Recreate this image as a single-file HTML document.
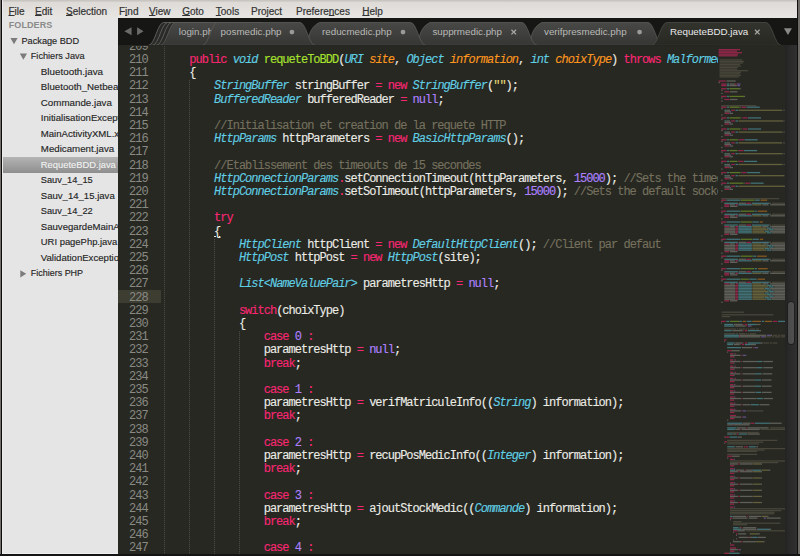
<!DOCTYPE html>
<html><head><meta charset="utf-8"><style>
*{margin:0;padding:0;box-sizing:border-box}
html,body{width:800px;height:556px;overflow:hidden;background:#272822;position:relative}
body{font-family:"Liberation Sans",sans-serif}
#top{position:absolute;left:0;top:0;width:800px;height:2px;background:linear-gradient(#c4c1bd,#d6d3cf);z-index:5}
#menubar{position:absolute;left:0;top:0;width:800px;height:17.5px;background:linear-gradient(#dcd9d5,#e8e6e3);z-index:4}
.mi{position:absolute;top:5.8px;font-size:10px;color:#333;-webkit-text-stroke:0.2px #333;line-height:12px;white-space:nowrap}
.mi u{text-decoration:underline;text-underline-offset:0px;text-decoration-thickness:1px}
#sidebar{position:absolute;left:0;top:17.5px;width:118px;height:540px;background:#e5e5e5;overflow:hidden;z-index:3}
#folders{position:absolute;left:8.7px;top:2.6px;font-size:9px;font-weight:bold;color:#8a8a8a;letter-spacing:0.1px}
.si{position:absolute;font-size:9.2px;color:#262626;-webkit-text-stroke:0.15px #262626;white-space:nowrap;line-height:12px;margin-top:-16.2px}
.selt{color:#f2f2f2;-webkit-text-stroke:0.1px #f2f2f2}
.sel{position:absolute;left:0;width:118px;height:15.7px;background:linear-gradient(#b4b4b4,#8e8e8e);margin-top:-16.2px}
.tri{position:absolute;width:0;height:0;border-left:3.7px solid transparent;border-right:3.7px solid transparent;border-top:6.4px solid #7c7c7c;margin-top:-16.2px}
.tric{position:absolute;width:0;height:0;border-top:3.8px solid transparent;border-bottom:3.8px solid transparent;border-left:6px solid #7a7a7a;margin-top:-16.2px}
#tabbar{position:absolute;left:118px;top:17.5px;width:682px;height:27.3px;background:#1c1c1a;z-index:3;overflow:hidden}
#tabbar svg{position:absolute;left:0;top:0}
#curline{position:absolute;left:118px;width:43px;height:13.2px;background:#3e3d32;top:290.1px}
.gn{position:absolute;left:118px;width:29.6px;text-align:right;font-family:"Liberation Mono",monospace;font-size:12px;letter-spacing:-1px;color:#898a83;line-height:13.2px;white-space:pre}
.cl{position:absolute;left:164.5px;-webkit-text-stroke:0.12px currentColor;font-family:"Liberation Mono",monospace;font-size:12px;letter-spacing:-1px;color:#ececE6;line-height:13.2px;white-space:pre}
.ig{position:absolute;width:1px;background:repeating-linear-gradient(#45463e 0 1px,#2f302a 1px 2px)}
.kw{color:#f92672}
.ty{color:#60cfe4;font-style:italic}
.fn{color:#a6e22e}
.pa{color:#fd971f;font-style:italic}
.nu{color:#ae81ff}
.st{color:#e6db74}
.cm{color:#75715e}
.ul{text-decoration:underline}
#minimap{position:absolute;left:718px;top:44px;width:67px;height:512px;background:#272822;z-index:2;overflow:hidden}
#sbtrack{position:absolute;left:785.4px;top:44px;width:11.6px;height:512px;background:linear-gradient(90deg,#232323,#2a2a2a 40%,#303030);z-index:2}
#thumb{position:absolute;left:2.3px;top:258.2px;width:6.4px;height:41.8px;border-radius:3.2px;background:linear-gradient(90deg,#4a4a4a,#505050);box-shadow:0 0 0 1px #1e1e1e}
#rborder{position:absolute;left:797px;top:0;width:3px;height:556px;background:linear-gradient(90deg,#0e0e0e 0 1px,#6d6965 1px);z-index:6}
#lborder{position:absolute;left:0;top:0;width:3px;height:556px;background:linear-gradient(90deg,#77716c 0 1.2px,#0a0a0a 1.2px 2.2px,#ececec 2.2px);z-index:6}
#bborder{position:absolute;left:0;top:553.8px;width:800px;height:2.2px;background:#141414;z-index:6}
#sbline{position:absolute;left:2px;top:552.8px;width:116px;height:1px;background:#eeeeee;z-index:5}
#minimap i{position:absolute;height:1.25px;display:block}
#edtop{position:absolute;left:118px;top:44.8px;width:600px;height:1.7px;background:#252621;z-index:3}

</style></head><body>
<div id="top"></div>
<div id="menubar"><div class="mi" style="left:8.5px"><u>F</u>ile</div>
<div class="mi" style="left:35px"><u>E</u>dit</div>
<div class="mi" style="left:66px"><u>S</u>election</div>
<div class="mi" style="left:119px">F<u>i</u>nd</div>
<div class="mi" style="left:149px"><u>V</u>iew</div>
<div class="mi" style="left:182.2px"><u>G</u>oto</div>
<div class="mi" style="left:215.8px"><u>T</u>ools</div>
<div class="mi" style="left:251px">Project</div>
<div class="mi" style="left:296px">Prefere<u>n</u>ces</div>
<div class="mi" style="left:362.3px"><u>H</u>elp</div></div>
<div id="sidebar">
<div id="folders">FOLDERS</div>
<div class="si" style="top:33.5px;left:21.5px;font-size:9.19px">Package BDD</div>
<svg style="position:absolute;left:0;top:0;overflow:visible" width="1" height="1"><path d="M10.4,19.90 L17.60,19.90 L14.00,26.20 Z" fill="#7c7c7c"/></svg>
<div class="si" style="top:49.0px;left:30.75px;font-size:9.17px">Fichiers Java</div>
<svg style="position:absolute;left:0;top:0;overflow:visible" width="1" height="1"><path d="M19.8,35.40 L27.00,35.40 L23.40,41.70 Z" fill="#7c7c7c"/></svg>
<div class="si" style="top:64.5px;left:40.8px;font-size:9.83px">Bluetooth.java</div>
<div class="si" style="top:80.0px;left:40.8px;font-size:9.7px">Bluetooth_Netbeans.java</div>
<div class="si" style="top:95.5px;left:40.8px;font-size:9.78px">Commande.java</div>
<div class="si" style="top:111.0px;left:40.8px;font-size:9.6px">InitialisationException.java</div>
<div class="si" style="top:126.5px;left:40.8px;font-size:9.6px">MainActivityXML.xml</div>
<div class="si" style="top:142.0px;left:40.8px;font-size:9.71px">Medicament.java</div>
<div class="sel" style="top:155.5px"></div>
<div class="si selt" style="top:157.5px;left:40.8px;font-size:9.39px">RequeteBDD.java</div>
<div class="si" style="top:173.0px;left:40.8px;font-size:9.26px">Sauv_14_15</div>
<div class="si" style="top:188.5px;left:40.8px;font-size:9.57px">Sauv_14_15.java</div>
<div class="si" style="top:204.0px;left:40.8px;font-size:9.26px">Sauv_14_22</div>
<div class="si" style="top:219.5px;left:40.8px;font-size:9.6px">SauvegardeMainActivity.java</div>
<div class="si" style="top:235.0px;left:40.8px;font-size:9.44px">URI pagePhp.java</div>
<div class="si" style="top:250.5px;left:40.8px;font-size:9.6px">ValidationException.java</div>
<div class="si" style="top:266.0px;left:30.75px;font-size:8.98px">Fichiers PHP</div>
<svg style="position:absolute;left:0;top:0;overflow:visible" width="1" height="1"><path d="M20.3,252.20 L26.2,255.80 L20.3,259.40 Z" fill="#7c7c7c"/></svg>
</div>
<div id="tabbar"><svg width="682" height="27.3" viewBox="118 17.5 682 27.3">
<defs><linearGradient id="gi" x1="0" y1="0" x2="0" y2="1"><stop offset="0" stop-color="#484846"/><stop offset="1" stop-color="#363634"/></linearGradient>
<linearGradient id="ga" x1="0" y1="0" x2="0" y2="1"><stop offset="0" stop-color="#32332d"/><stop offset="1" stop-color="#272822"/></linearGradient></defs>
<rect x="118" y="17.5" width="682" height="27.3" fill="#161614"/>
<path d="M124.3,30.75 L131.5,26.7 L131.5,34.8 Z" fill="#6a6a68"/>
<path d="M143.5,30.75 L137,26.7 L137,34.8 Z" fill="#6a6a68"/>
<path d="M529.9,44.8 C530.9,40 530.9,27 541.9,22.0 L648.0,22.0 C654.0,22.0 657.0,44.8 663.0,44.8 Z" fill="url(#gi)" stroke="#5a5a58" stroke-width="0.8"/>
<text x="544" y="34.4" font-family="Liberation Sans" font-size="9.8" fill="#b9b9b7">verifpresmedic.php</text>
<circle cx="639.6" cy="31.6" r="2.4" fill="#9a9a98"/>
<path d="M418.0,44.8 C419.0,40 419.0,27 430.0,22.0 L521.9,22.0 C527.9,22.0 530.9,44.8 536.9,44.8 Z" fill="url(#gi)" stroke="#5a5a58" stroke-width="0.8"/>
<text x="432.4" y="34.4" font-family="Liberation Sans" font-size="9.8" fill="#b9b9b7">supprmedic.php</text>
<path d="M511.45,29.3 L516.05,33.9 M516.05,29.3 L511.45,33.9" stroke="#a8a8a6" stroke-width="1.3"/>
<path d="M307.4,44.8 C308.4,40 308.4,27 319.4,22.0 L410.6,22.0 C416.6,22.0 419.6,44.8 425.6,44.8 Z" fill="url(#gi)" stroke="#5a5a58" stroke-width="0.8"/>
<text x="322" y="34.4" font-family="Liberation Sans" font-size="9.8" fill="#b9b9b7">reducmedic.php</text>
<circle cx="403" cy="31.6" r="2.4" fill="#9a9a98"/>
<path d="M148.6,44.8 C154.6,44.8 157.6,22.0 163.6,22.0 L260.0,22.0 C266.0,22.0 269.0,44.8 275.0,44.8 Z" fill="#2a2a28" stroke="#62625f" stroke-width="0.9"/>
<path d="M152.6,44.8 C158.6,44.8 161.6,22.0 167.6,22.0 L260.0,22.0 C266.0,22.0 269.0,44.8 275.0,44.8 Z" fill="#2a2a28" stroke="#62625f" stroke-width="0.9"/>
<path d="M156.5,44.8 C162.5,44.8 165.5,22.0 171.5,22.0 L260.0,22.0 C266.0,22.0 269.0,44.8 275.0,44.8 Z" fill="#2a2a28" stroke="#62625f" stroke-width="0.9"/>
<path d="M160.4,44.8 C166.4,44.8 169.4,22.0 175.4,22.0 L260.0,22.0 C266.0,22.0 269.0,44.8 275.0,44.8 Z" fill="url(#gi)" stroke="#5a5a58" stroke-width="0.8"/>
<text x="178.8" y="34.4" font-family="Liberation Sans" font-size="9.8" fill="#b9b9b7">login.php</text>
<path d="M202.5,44.8 C208.5,44.8 211.5,22.0 217.5,22.0 L300.0,22.0 C306.0,22.0 309.0,44.8 315.0,44.8 Z" fill="url(#gi)" stroke="#5a5a58" stroke-width="0.8"/>
<text x="220.6" y="34.4" font-family="Liberation Sans" font-size="9.8" fill="#b9b9b7">posmedic.php</text>
<circle cx="291.9" cy="31.6" r="2.4" fill="#9a9a98"/>
<path d="M651.9,44.8 C657.9,44.8 660.9,22.0 666.9,22.0 L766.0,22.0 C772.0,22.0 775.0,44.8 781.0,44.8 Z" fill="url(#ga)" stroke="#4a4a46" stroke-width="0.8"/>
<text x="670" y="34.4" font-family="Liberation Sans" font-size="9.8" fill="#e8e8e8">RequeteBDD.java</text>
<path d="M755.0,29.3 L759.5999999999999,33.9 M759.5999999999999,29.3 L755.0,33.9" stroke="#a8a8a6" stroke-width="1.3"/>
<path d="M784,27.8 L792,27.8 L788,34.5 Z" fill="#8a8a88"/>
</svg></div>
<div id="edtop"></div>
<div id="editor">
<div id="curline"></div>
<div class="ig" style="left:164.4px;top:44.0px;height:524.7px"></div>
<div class="ig" style="left:189.3px;top:80.3px;height:488.4px"></div>
<div class="ig" style="left:214.2px;top:238.7px;height:330.0px"></div>
<div class="ig" style="left:239.1px;top:331.1px;height:237.6px"></div>
<div class="gn" style="top:40.70px">209</div>
<div class="gn" style="top:53.90px">210</div>
<div class="cl" style="top:53.90px">    <span class="kw">public</span> <span class="ty">void</span> <span class="fn">requeteToBDD</span>(<span class="ty">URI</span> <span class="pa">site</span>, <span class="ty">Object</span> <span class="pa">information</span>, <span class="ty">int</span> <span class="pa">choixType</span>) <span class="kw">throws</span> <span class="ty">MalformedURLException</span></div>
<div class="gn" style="top:67.10px">211</div>
<div class="cl" style="top:67.10px">    {</div>
<div class="gn" style="top:80.30px">212</div>
<div class="cl" style="top:80.30px">        <span class="ty">StringBuffer</span> stringBuffer <span class="kw">=</span> <span class="kw">new</span> <span class="ty">StringBuffer</span>(<span class="st">&quot;&quot;</span>);</div>
<div class="gn" style="top:93.50px">213</div>
<div class="cl" style="top:93.50px">        <span class="ty">BufferedReader</span> bufferedReader <span class="kw">=</span> <span class="nu">null</span>;</div>
<div class="gn" style="top:106.70px">214</div>
<div class="gn" style="top:119.90px">215</div>
<div class="cl" style="top:119.90px">        <span class="cm">//Initialisation et creation de la requete HTTP</span></div>
<div class="gn" style="top:133.10px">216</div>
<div class="cl" style="top:133.10px">        <span class="ty">HttpParams</span> httpParameters <span class="kw">=</span> <span class="kw">new</span> <span class="ty">BasicHttpParams</span>();</div>
<div class="gn" style="top:146.30px">217</div>
<div class="gn" style="top:159.50px">218</div>
<div class="cl" style="top:159.50px">        <span class="cm">//Etablissement des timeouts de 15 secondes</span></div>
<div class="gn" style="top:172.70px">219</div>
<div class="cl" style="top:172.70px">        <span class="ty">HttpConnectionParams</span><span class="kw">.</span>setConnectionTimeout(httpParameters, <span class="nu">15000</span>); <span class="cm">//Sets the timeout</span></div>
<div class="gn" style="top:185.90px">220</div>
<div class="cl" style="top:185.90px">        <span class="ty">HttpConnectionParams</span><span class="kw">.</span>setSoTimeout(httpParameters, <span class="nu">15000</span>); <span class="cm">//Sets the default socket</span></div>
<div class="gn" style="top:199.10px">221</div>
<div class="gn" style="top:212.30px">222</div>
<div class="cl" style="top:212.30px">        <span class="kw">try</span></div>
<div class="gn" style="top:225.50px">223</div>
<div class="cl" style="top:225.50px">        <span class="ul">{</span></div>
<div class="gn" style="top:238.70px">224</div>
<div class="cl" style="top:238.70px">            <span class="ty">HttpClient</span> httpClient <span class="kw">=</span> <span class="kw">new</span> <span class="ty">DefaultHttpClient</span>(); <span class="cm">//Client par defaut</span></div>
<div class="gn" style="top:251.90px">225</div>
<div class="cl" style="top:251.90px">            <span class="ty">HttpPost</span> httpPost <span class="kw">=</span> <span class="kw">new</span> <span class="ty">HttpPost</span>(site);</div>
<div class="gn" style="top:265.10px">226</div>
<div class="gn" style="top:278.30px">227</div>
<div class="cl" style="top:278.30px">            <span class="ty">List&lt;NameValuePair&gt;</span> parametresHttp <span class="kw">=</span> <span class="nu">null</span>;</div>
<div class="gn" style="top:291.50px">228</div>
<div class="gn" style="top:304.70px">229</div>
<div class="cl" style="top:304.70px">            <span class="kw">switch</span>(choixType)</div>
<div class="gn" style="top:317.90px">230</div>
<div class="cl" style="top:317.90px">            {</div>
<div class="gn" style="top:331.10px">231</div>
<div class="cl" style="top:331.10px">                <span class="kw">case</span> <span class="nu">0</span> <span class="kw">:</span></div>
<div class="gn" style="top:344.30px">232</div>
<div class="cl" style="top:344.30px">                parametresHttp <span class="kw">=</span> <span class="nu">null</span>;</div>
<div class="gn" style="top:357.50px">233</div>
<div class="cl" style="top:357.50px">                <span class="kw">break</span>;</div>
<div class="gn" style="top:370.70px">234</div>
<div class="gn" style="top:383.90px">235</div>
<div class="cl" style="top:383.90px">                <span class="kw">case</span> <span class="nu">1</span> <span class="kw">:</span></div>
<div class="gn" style="top:397.10px">236</div>
<div class="cl" style="top:397.10px">                parametresHttp <span class="kw">=</span> verifMatriculeInfo((<span class="ty">String</span>) information);</div>
<div class="gn" style="top:410.30px">237</div>
<div class="cl" style="top:410.30px">                <span class="kw">break</span>;</div>
<div class="gn" style="top:423.50px">238</div>
<div class="gn" style="top:436.70px">239</div>
<div class="cl" style="top:436.70px">                <span class="kw">case</span> <span class="nu">2</span> <span class="kw">:</span></div>
<div class="gn" style="top:449.90px">240</div>
<div class="cl" style="top:449.90px">                parametresHttp <span class="kw">=</span> recupPosMedicInfo((<span class="ty">Integer</span>) information);</div>
<div class="gn" style="top:463.10px">241</div>
<div class="cl" style="top:463.10px">                <span class="kw">break</span>;</div>
<div class="gn" style="top:476.30px">242</div>
<div class="gn" style="top:489.50px">243</div>
<div class="cl" style="top:489.50px">                <span class="kw">case</span> <span class="nu">3</span> <span class="kw">:</span></div>
<div class="gn" style="top:502.70px">244</div>
<div class="cl" style="top:502.70px">                parametresHttp <span class="kw">=</span> ajoutStockMedic((<span class="ty">Commande</span>) information);</div>
<div class="gn" style="top:515.90px">245</div>
<div class="cl" style="top:515.90px">                <span class="kw">break</span>;</div>
<div class="gn" style="top:529.10px">246</div>
<div class="gn" style="top:542.30px">247</div>
<div class="cl" style="top:542.30px">                <span class="kw">case</span> <span class="nu">4</span> <span class="kw">:</span></div>
<div class="gn" style="top:555.50px">248</div>
<div id="minimap"><svg width="67" height="512" viewBox="718 44 67 512" style="position:absolute;left:0;top:0"><defs><filter id="mb" x="-5%" y="-5%" width="110%" height="110%"><feGaussianBlur stdDeviation="0.35"/></filter></defs><g filter="url(#mb)"><rect x="718.60" y="48.98" width="21.40" height="1.25" fill="rgb(249,38,114)" fill-opacity="0.5"/><rect x="718.60" y="50.52" width="18.40" height="1.25" fill="rgb(249,38,114)" fill-opacity="0.5"/><rect x="718.60" y="52.06" width="23.40" height="1.25" fill="rgb(249,38,114)" fill-opacity="0.5"/><rect x="718.60" y="53.60" width="19.40" height="1.25" fill="rgb(249,38,114)" fill-opacity="0.5"/><rect x="718.60" y="55.15" width="18.90" height="1.25" fill="rgb(249,38,114)" fill-opacity="0.5"/><rect x="719.50" y="59.27" width="22.50" height="1.25" fill="rgb(117,113,94)" fill-opacity="0.42"/><rect x="719.50" y="60.82" width="24.50" height="1.25" fill="rgb(117,113,94)" fill-opacity="0.42"/><rect x="719.50" y="62.36" width="23.50" height="1.25" fill="rgb(117,113,94)" fill-opacity="0.42"/><rect x="719.50" y="63.90" width="20.50" height="1.25" fill="rgb(117,113,94)" fill-opacity="0.42"/><rect x="719.50" y="65.45" width="21.50" height="1.25" fill="rgb(117,113,94)" fill-opacity="0.42"/><rect x="719.50" y="66.99" width="18.50" height="1.25" fill="rgb(117,113,94)" fill-opacity="0.42"/><rect x="719.50" y="68.53" width="17.50" height="1.25" fill="rgb(117,113,94)" fill-opacity="0.42"/><rect x="719.50" y="70.08" width="28.50" height="1.25" fill="rgb(117,113,94)" fill-opacity="0.42"/><rect x="719.50" y="71.62" width="21.50" height="1.25" fill="rgb(117,113,94)" fill-opacity="0.42"/><rect x="719.50" y="73.16" width="20.50" height="1.25" fill="rgb(117,113,94)" fill-opacity="0.42"/><rect x="719.50" y="74.70" width="21.50" height="1.25" fill="rgb(117,113,94)" fill-opacity="0.42"/><rect x="719.50" y="76.25" width="19.50" height="1.25" fill="rgb(117,113,94)" fill-opacity="0.42"/><rect x="718.62" y="80.38" width="7.00" height="1.25" fill="rgb(249,38,114)" fill-opacity="0.5"/><rect x="726.50" y="80.38" width="9.19" height="1.25" fill="rgb(248,248,242)" fill-opacity="0.27"/><rect x="718.62" y="81.92" width="1.31" height="1.25" fill="rgb(248,248,242)" fill-opacity="0.27"/><rect x="721.25" y="83.46" width="5.25" height="1.25" fill="rgb(249,38,114)" fill-opacity="0.5"/><rect x="726.94" y="83.46" width="2.19" height="1.25" fill="rgb(102,217,239)" fill-opacity="0.42"/><rect x="729.56" y="83.46" width="5.25" height="1.25" fill="rgb(248,248,242)" fill-opacity="0.27"/><rect x="734.81" y="83.46" width="1.75" height="1.25" fill="rgb(249,38,114)" fill-opacity="0.5"/><rect x="737.00" y="83.46" width="3.50" height="1.25" fill="rgb(174,129,255)" fill-opacity="0.45"/><rect x="721.25" y="85.00" width="5.25" height="1.25" fill="rgb(249,38,114)" fill-opacity="0.5"/><rect x="726.94" y="85.00" width="2.19" height="1.25" fill="rgb(102,217,239)" fill-opacity="0.42"/><rect x="729.56" y="85.00" width="7.26" height="1.25" fill="rgb(248,248,242)" fill-opacity="0.27"/><rect x="737.43" y="85.00" width="2.62" height="1.25" fill="rgb(174,129,255)" fill-opacity="0.45"/><rect x="721.25" y="88.09" width="5.25" height="1.25" fill="rgb(249,38,114)" fill-opacity="0.5"/><rect x="726.94" y="88.09" width="2.19" height="1.25" fill="rgb(102,217,239)" fill-opacity="0.42"/><rect x="729.56" y="88.09" width="10.06" height="1.25" fill="rgb(166,226,46)" fill-opacity="0.42"/><rect x="739.62" y="88.09" width="1.05" height="1.25" fill="rgb(248,248,242)" fill-opacity="0.27"/><rect x="721.25" y="89.63" width="1.31" height="1.25" fill="rgb(248,248,242)" fill-opacity="0.27"/><rect x="724.31" y="91.18" width="5.25" height="1.25" fill="rgb(249,38,114)" fill-opacity="0.5"/><rect x="730.00" y="91.18" width="7.44" height="1.25" fill="rgb(248,248,242)" fill-opacity="0.27"/><rect x="721.25" y="92.72" width="1.31" height="1.25" fill="rgb(248,248,242)" fill-opacity="0.27"/><rect x="721.25" y="95.81" width="5.25" height="1.25" fill="rgb(249,38,114)" fill-opacity="0.5"/><rect x="726.94" y="95.81" width="2.19" height="1.25" fill="rgb(102,217,239)" fill-opacity="0.42"/><rect x="729.56" y="95.81" width="14.44" height="1.25" fill="rgb(166,226,46)" fill-opacity="0.42"/><rect x="744.00" y="95.81" width="1.05" height="1.25" fill="rgb(248,248,242)" fill-opacity="0.27"/><rect x="721.25" y="97.35" width="1.31" height="1.25" fill="rgb(248,248,242)" fill-opacity="0.27"/><rect x="724.31" y="98.89" width="5.25" height="1.25" fill="rgb(249,38,114)" fill-opacity="0.5"/><rect x="730.00" y="98.89" width="7.44" height="1.25" fill="rgb(248,248,242)" fill-opacity="0.27"/><rect x="721.25" y="100.43" width="1.31" height="1.25" fill="rgb(248,248,242)" fill-opacity="0.27"/><rect x="721.25" y="105.06" width="35.00" height="1.25" fill="rgb(117,113,94)" fill-opacity="0.42"/><rect x="721.25" y="106.58" width="5.25" height="1.25" fill="rgb(249,38,114)" fill-opacity="0.5"/><rect x="726.94" y="106.58" width="2.19" height="1.25" fill="rgb(102,217,239)" fill-opacity="0.42"/><rect x="729.56" y="106.58" width="10.06" height="1.25" fill="rgb(166,226,46)" fill-opacity="0.42"/><rect x="740.06" y="106.58" width="0.61" height="1.25" fill="rgb(248,248,242)" fill-opacity="0.27"/><rect x="741.37" y="106.58" width="4.81" height="1.25" fill="rgb(249,38,114)" fill-opacity="0.5"/><rect x="746.62" y="106.58" width="13.12" height="1.25" fill="rgb(102,217,239)" fill-opacity="0.42"/><rect x="721.25" y="108.12" width="1.31" height="1.25" fill="rgb(248,248,242)" fill-opacity="0.27"/><rect x="724.49" y="109.66" width="1.84" height="1.25" fill="rgb(102,217,239)" fill-opacity="0.42"/><rect x="726.50" y="109.66" width="3.50" height="1.25" fill="rgb(248,248,242)" fill-opacity="0.27"/><rect x="731.31" y="109.66" width="3.50" height="1.25" fill="rgb(249,38,114)" fill-opacity="0.5"/><rect x="735.51" y="109.66" width="2.45" height="1.25" fill="rgb(102,217,239)" fill-opacity="0.42"/><rect x="738.48" y="109.66" width="42.69" height="1.25" fill="rgb(230,219,116)" fill-opacity="0.32"/><rect x="781.18" y="109.66" width="1.05" height="1.25" fill="rgb(248,248,242)" fill-opacity="0.27"/><rect x="782.93" y="109.66" width="3.06" height="1.25" fill="rgb(117,113,94)" fill-opacity="0.42"/><rect x="724.49" y="111.20" width="5.51" height="1.25" fill="rgb(248,248,242)" fill-opacity="0.27"/><rect x="730.00" y="111.20" width="1.05" height="1.25" fill="rgb(174,129,255)" fill-opacity="0.45"/><rect x="724.49" y="112.75" width="4.55" height="1.25" fill="rgb(249,38,114)" fill-opacity="0.5"/><rect x="729.47" y="112.75" width="3.50" height="1.25" fill="rgb(248,248,242)" fill-opacity="0.27"/><rect x="721.25" y="114.29" width="1.31" height="1.25" fill="rgb(248,248,242)" fill-opacity="0.27"/><rect x="721.25" y="117.28" width="5.25" height="1.25" fill="rgb(249,38,114)" fill-opacity="0.5"/><rect x="726.94" y="117.28" width="2.19" height="1.25" fill="rgb(102,217,239)" fill-opacity="0.42"/><rect x="729.56" y="117.28" width="10.94" height="1.25" fill="rgb(166,226,46)" fill-opacity="0.42"/><rect x="740.93" y="117.28" width="0.61" height="1.25" fill="rgb(248,248,242)" fill-opacity="0.27"/><rect x="742.68" y="117.28" width="4.81" height="1.25" fill="rgb(249,38,114)" fill-opacity="0.5"/><rect x="747.93" y="117.28" width="13.12" height="1.25" fill="rgb(102,217,239)" fill-opacity="0.42"/><rect x="721.25" y="118.82" width="1.31" height="1.25" fill="rgb(248,248,242)" fill-opacity="0.27"/><rect x="724.49" y="120.36" width="1.84" height="1.25" fill="rgb(102,217,239)" fill-opacity="0.42"/><rect x="726.50" y="120.36" width="3.50" height="1.25" fill="rgb(248,248,242)" fill-opacity="0.27"/><rect x="731.31" y="120.36" width="3.50" height="1.25" fill="rgb(249,38,114)" fill-opacity="0.5"/><rect x="735.51" y="120.36" width="2.45" height="1.25" fill="rgb(102,217,239)" fill-opacity="0.42"/><rect x="738.48" y="120.36" width="44.01" height="1.25" fill="rgb(230,219,116)" fill-opacity="0.32"/><rect x="782.49" y="120.36" width="1.05" height="1.25" fill="rgb(248,248,242)" fill-opacity="0.27"/><rect x="784.24" y="120.36" width="1.75" height="1.25" fill="rgb(117,113,94)" fill-opacity="0.42"/><rect x="724.49" y="121.90" width="5.51" height="1.25" fill="rgb(248,248,242)" fill-opacity="0.27"/><rect x="730.00" y="121.90" width="1.05" height="1.25" fill="rgb(174,129,255)" fill-opacity="0.45"/><rect x="724.49" y="123.45" width="4.55" height="1.25" fill="rgb(249,38,114)" fill-opacity="0.5"/><rect x="729.47" y="123.45" width="3.50" height="1.25" fill="rgb(248,248,242)" fill-opacity="0.27"/><rect x="721.25" y="124.99" width="1.31" height="1.25" fill="rgb(248,248,242)" fill-opacity="0.27"/><rect x="721.25" y="128.38" width="5.25" height="1.25" fill="rgb(249,38,114)" fill-opacity="0.5"/><rect x="726.94" y="128.38" width="2.19" height="1.25" fill="rgb(102,217,239)" fill-opacity="0.42"/><rect x="729.56" y="128.38" width="10.94" height="1.25" fill="rgb(166,226,46)" fill-opacity="0.42"/><rect x="740.93" y="128.38" width="0.61" height="1.25" fill="rgb(248,248,242)" fill-opacity="0.27"/><rect x="742.68" y="128.38" width="4.81" height="1.25" fill="rgb(249,38,114)" fill-opacity="0.5"/><rect x="747.93" y="128.38" width="13.12" height="1.25" fill="rgb(102,217,239)" fill-opacity="0.42"/><rect x="721.25" y="129.92" width="1.31" height="1.25" fill="rgb(248,248,242)" fill-opacity="0.27"/><rect x="724.49" y="131.46" width="1.84" height="1.25" fill="rgb(102,217,239)" fill-opacity="0.42"/><rect x="726.50" y="131.46" width="3.50" height="1.25" fill="rgb(248,248,242)" fill-opacity="0.27"/><rect x="731.31" y="131.46" width="3.50" height="1.25" fill="rgb(249,38,114)" fill-opacity="0.5"/><rect x="735.51" y="131.46" width="2.45" height="1.25" fill="rgb(102,217,239)" fill-opacity="0.42"/><rect x="738.48" y="131.46" width="43.13" height="1.25" fill="rgb(230,219,116)" fill-opacity="0.32"/><rect x="781.62" y="131.46" width="1.05" height="1.25" fill="rgb(248,248,242)" fill-opacity="0.27"/><rect x="783.37" y="131.46" width="2.62" height="1.25" fill="rgb(117,113,94)" fill-opacity="0.42"/><rect x="724.49" y="133.00" width="5.51" height="1.25" fill="rgb(248,248,242)" fill-opacity="0.27"/><rect x="730.00" y="133.00" width="1.05" height="1.25" fill="rgb(174,129,255)" fill-opacity="0.45"/><rect x="724.49" y="134.55" width="4.55" height="1.25" fill="rgb(249,38,114)" fill-opacity="0.5"/><rect x="729.47" y="134.55" width="3.50" height="1.25" fill="rgb(248,248,242)" fill-opacity="0.27"/><rect x="721.25" y="136.09" width="1.31" height="1.25" fill="rgb(248,248,242)" fill-opacity="0.27"/><rect x="721.25" y="139.18" width="5.25" height="1.25" fill="rgb(249,38,114)" fill-opacity="0.5"/><rect x="726.94" y="139.18" width="2.19" height="1.25" fill="rgb(102,217,239)" fill-opacity="0.42"/><rect x="729.56" y="139.18" width="8.31" height="1.25" fill="rgb(166,226,46)" fill-opacity="0.42"/><rect x="738.31" y="139.18" width="0.61" height="1.25" fill="rgb(248,248,242)" fill-opacity="0.27"/><rect x="739.18" y="139.18" width="4.81" height="1.25" fill="rgb(249,38,114)" fill-opacity="0.5"/><rect x="744.43" y="139.18" width="13.12" height="1.25" fill="rgb(102,217,239)" fill-opacity="0.42"/><rect x="721.25" y="140.72" width="1.31" height="1.25" fill="rgb(248,248,242)" fill-opacity="0.27"/><rect x="724.49" y="142.26" width="1.84" height="1.25" fill="rgb(102,217,239)" fill-opacity="0.42"/><rect x="726.50" y="142.26" width="3.50" height="1.25" fill="rgb(248,248,242)" fill-opacity="0.27"/><rect x="731.31" y="142.26" width="3.50" height="1.25" fill="rgb(249,38,114)" fill-opacity="0.5"/><rect x="735.51" y="142.26" width="2.45" height="1.25" fill="rgb(102,217,239)" fill-opacity="0.42"/><rect x="738.48" y="142.26" width="42.69" height="1.25" fill="rgb(230,219,116)" fill-opacity="0.32"/><rect x="781.18" y="142.26" width="1.05" height="1.25" fill="rgb(248,248,242)" fill-opacity="0.27"/><rect x="782.93" y="142.26" width="3.06" height="1.25" fill="rgb(117,113,94)" fill-opacity="0.42"/><rect x="724.49" y="143.80" width="5.51" height="1.25" fill="rgb(248,248,242)" fill-opacity="0.27"/><rect x="730.00" y="143.80" width="1.05" height="1.25" fill="rgb(174,129,255)" fill-opacity="0.45"/><rect x="724.49" y="145.35" width="4.55" height="1.25" fill="rgb(249,38,114)" fill-opacity="0.5"/><rect x="729.47" y="145.35" width="3.50" height="1.25" fill="rgb(248,248,242)" fill-opacity="0.27"/><rect x="721.25" y="146.89" width="1.31" height="1.25" fill="rgb(248,248,242)" fill-opacity="0.27"/><rect x="721.25" y="149.97" width="5.25" height="1.25" fill="rgb(249,38,114)" fill-opacity="0.5"/><rect x="726.94" y="149.97" width="2.19" height="1.25" fill="rgb(102,217,239)" fill-opacity="0.42"/><rect x="729.56" y="149.97" width="7.87" height="1.25" fill="rgb(166,226,46)" fill-opacity="0.42"/><rect x="737.87" y="149.97" width="0.61" height="1.25" fill="rgb(248,248,242)" fill-opacity="0.27"/><rect x="738.75" y="149.97" width="4.81" height="1.25" fill="rgb(249,38,114)" fill-opacity="0.5"/><rect x="744.00" y="149.97" width="13.12" height="1.25" fill="rgb(102,217,239)" fill-opacity="0.42"/><rect x="721.25" y="151.52" width="1.31" height="1.25" fill="rgb(248,248,242)" fill-opacity="0.27"/><rect x="724.49" y="153.06" width="1.84" height="1.25" fill="rgb(102,217,239)" fill-opacity="0.42"/><rect x="726.50" y="153.06" width="3.50" height="1.25" fill="rgb(248,248,242)" fill-opacity="0.27"/><rect x="731.31" y="153.06" width="3.50" height="1.25" fill="rgb(249,38,114)" fill-opacity="0.5"/><rect x="735.51" y="153.06" width="2.45" height="1.25" fill="rgb(102,217,239)" fill-opacity="0.42"/><rect x="738.48" y="153.06" width="43.13" height="1.25" fill="rgb(230,219,116)" fill-opacity="0.32"/><rect x="781.62" y="153.06" width="1.05" height="1.25" fill="rgb(248,248,242)" fill-opacity="0.27"/><rect x="783.37" y="153.06" width="2.62" height="1.25" fill="rgb(117,113,94)" fill-opacity="0.42"/><rect x="724.49" y="154.60" width="5.51" height="1.25" fill="rgb(248,248,242)" fill-opacity="0.27"/><rect x="730.00" y="154.60" width="1.05" height="1.25" fill="rgb(174,129,255)" fill-opacity="0.45"/><rect x="724.49" y="156.15" width="4.55" height="1.25" fill="rgb(249,38,114)" fill-opacity="0.5"/><rect x="729.47" y="156.15" width="3.50" height="1.25" fill="rgb(248,248,242)" fill-opacity="0.27"/><rect x="721.25" y="157.69" width="1.31" height="1.25" fill="rgb(248,248,242)" fill-opacity="0.27"/><rect x="721.25" y="160.78" width="5.25" height="1.25" fill="rgb(249,38,114)" fill-opacity="0.5"/><rect x="726.94" y="160.78" width="2.19" height="1.25" fill="rgb(102,217,239)" fill-opacity="0.42"/><rect x="729.56" y="160.78" width="7.87" height="1.25" fill="rgb(166,226,46)" fill-opacity="0.42"/><rect x="737.87" y="160.78" width="0.61" height="1.25" fill="rgb(248,248,242)" fill-opacity="0.27"/><rect x="738.75" y="160.78" width="4.81" height="1.25" fill="rgb(249,38,114)" fill-opacity="0.5"/><rect x="744.00" y="160.78" width="13.12" height="1.25" fill="rgb(102,217,239)" fill-opacity="0.42"/><rect x="721.25" y="162.32" width="1.31" height="1.25" fill="rgb(248,248,242)" fill-opacity="0.27"/><rect x="724.49" y="163.86" width="1.84" height="1.25" fill="rgb(102,217,239)" fill-opacity="0.42"/><rect x="726.50" y="163.86" width="3.50" height="1.25" fill="rgb(248,248,242)" fill-opacity="0.27"/><rect x="731.31" y="163.86" width="3.50" height="1.25" fill="rgb(249,38,114)" fill-opacity="0.5"/><rect x="735.51" y="163.86" width="2.45" height="1.25" fill="rgb(102,217,239)" fill-opacity="0.42"/><rect x="738.48" y="163.86" width="43.13" height="1.25" fill="rgb(230,219,116)" fill-opacity="0.32"/><rect x="781.62" y="163.86" width="1.05" height="1.25" fill="rgb(248,248,242)" fill-opacity="0.27"/><rect x="783.37" y="163.86" width="2.62" height="1.25" fill="rgb(117,113,94)" fill-opacity="0.42"/><rect x="724.49" y="165.40" width="5.51" height="1.25" fill="rgb(248,248,242)" fill-opacity="0.27"/><rect x="730.00" y="165.40" width="1.05" height="1.25" fill="rgb(174,129,255)" fill-opacity="0.45"/><rect x="724.49" y="166.95" width="4.55" height="1.25" fill="rgb(249,38,114)" fill-opacity="0.5"/><rect x="729.47" y="166.95" width="3.50" height="1.25" fill="rgb(248,248,242)" fill-opacity="0.27"/><rect x="721.25" y="168.49" width="1.31" height="1.25" fill="rgb(248,248,242)" fill-opacity="0.27"/><rect x="721.25" y="171.97" width="5.25" height="1.25" fill="rgb(249,38,114)" fill-opacity="0.5"/><rect x="726.94" y="171.97" width="2.19" height="1.25" fill="rgb(102,217,239)" fill-opacity="0.42"/><rect x="729.56" y="171.97" width="10.94" height="1.25" fill="rgb(166,226,46)" fill-opacity="0.42"/><rect x="740.93" y="171.97" width="0.61" height="1.25" fill="rgb(248,248,242)" fill-opacity="0.27"/><rect x="741.81" y="171.97" width="4.81" height="1.25" fill="rgb(249,38,114)" fill-opacity="0.5"/><rect x="747.06" y="171.97" width="13.12" height="1.25" fill="rgb(102,217,239)" fill-opacity="0.42"/><rect x="721.25" y="173.52" width="1.31" height="1.25" fill="rgb(248,248,242)" fill-opacity="0.27"/><rect x="724.49" y="175.06" width="1.84" height="1.25" fill="rgb(102,217,239)" fill-opacity="0.42"/><rect x="726.50" y="175.06" width="3.50" height="1.25" fill="rgb(248,248,242)" fill-opacity="0.27"/><rect x="731.31" y="175.06" width="3.50" height="1.25" fill="rgb(249,38,114)" fill-opacity="0.5"/><rect x="735.51" y="175.06" width="2.45" height="1.25" fill="rgb(102,217,239)" fill-opacity="0.42"/><rect x="738.48" y="175.06" width="44.88" height="1.25" fill="rgb(230,219,116)" fill-opacity="0.32"/><rect x="783.37" y="175.06" width="1.05" height="1.25" fill="rgb(248,248,242)" fill-opacity="0.27"/><rect x="785.12" y="175.06" width="0.87" height="1.25" fill="rgb(117,113,94)" fill-opacity="0.42"/><rect x="724.49" y="176.60" width="5.51" height="1.25" fill="rgb(248,248,242)" fill-opacity="0.27"/><rect x="730.00" y="176.60" width="1.05" height="1.25" fill="rgb(174,129,255)" fill-opacity="0.45"/><rect x="724.49" y="178.15" width="4.55" height="1.25" fill="rgb(249,38,114)" fill-opacity="0.5"/><rect x="729.47" y="178.15" width="3.50" height="1.25" fill="rgb(248,248,242)" fill-opacity="0.27"/><rect x="721.25" y="179.69" width="1.31" height="1.25" fill="rgb(248,248,242)" fill-opacity="0.27"/><rect x="721.25" y="182.57" width="5.25" height="1.25" fill="rgb(249,38,114)" fill-opacity="0.5"/><rect x="726.94" y="182.57" width="2.19" height="1.25" fill="rgb(102,217,239)" fill-opacity="0.42"/><rect x="729.56" y="182.57" width="14.00" height="1.25" fill="rgb(166,226,46)" fill-opacity="0.42"/><rect x="744.00" y="182.57" width="0.61" height="1.25" fill="rgb(248,248,242)" fill-opacity="0.27"/><rect x="745.31" y="182.57" width="4.81" height="1.25" fill="rgb(249,38,114)" fill-opacity="0.5"/><rect x="750.56" y="182.57" width="13.12" height="1.25" fill="rgb(102,217,239)" fill-opacity="0.42"/><rect x="721.25" y="184.12" width="1.31" height="1.25" fill="rgb(248,248,242)" fill-opacity="0.27"/><rect x="724.49" y="185.66" width="1.84" height="1.25" fill="rgb(102,217,239)" fill-opacity="0.42"/><rect x="726.50" y="185.66" width="3.50" height="1.25" fill="rgb(248,248,242)" fill-opacity="0.27"/><rect x="731.31" y="185.66" width="3.50" height="1.25" fill="rgb(249,38,114)" fill-opacity="0.5"/><rect x="735.51" y="185.66" width="2.45" height="1.25" fill="rgb(102,217,239)" fill-opacity="0.42"/><rect x="738.48" y="185.66" width="45.76" height="1.25" fill="rgb(230,219,116)" fill-opacity="0.32"/><rect x="784.24" y="185.66" width="1.05" height="1.25" fill="rgb(248,248,242)" fill-opacity="0.27"/><rect x="724.49" y="187.20" width="5.51" height="1.25" fill="rgb(248,248,242)" fill-opacity="0.27"/><rect x="730.00" y="187.20" width="1.05" height="1.25" fill="rgb(174,129,255)" fill-opacity="0.45"/><rect x="724.49" y="188.75" width="4.55" height="1.25" fill="rgb(249,38,114)" fill-opacity="0.5"/><rect x="729.47" y="188.75" width="3.50" height="1.25" fill="rgb(248,248,242)" fill-opacity="0.27"/><rect x="721.25" y="190.29" width="1.31" height="1.25" fill="rgb(248,248,242)" fill-opacity="0.27"/><rect x="721.25" y="197.97" width="57.74" height="1.25" fill="rgb(117,113,94)" fill-opacity="0.42"/><rect x="721.25" y="199.57" width="4.81" height="1.25" fill="rgb(249,38,114)" fill-opacity="0.5"/><rect x="726.50" y="199.57" width="14.00" height="1.25" fill="rgb(102,217,239)" fill-opacity="0.42"/><rect x="740.93" y="199.57" width="13.56" height="1.25" fill="rgb(166,226,46)" fill-opacity="0.42"/><rect x="754.93" y="199.57" width="4.81" height="1.25" fill="rgb(102,217,239)" fill-opacity="0.42"/><rect x="760.62" y="199.57" width="6.56" height="1.25" fill="rgb(253,151,31)" fill-opacity="0.45"/><rect x="721.25" y="201.12" width="1.31" height="1.25" fill="rgb(248,248,242)" fill-opacity="0.27"/><rect x="724.31" y="202.66" width="13.56" height="1.25" fill="rgb(102,217,239)" fill-opacity="0.42"/><rect x="738.75" y="202.66" width="7.44" height="1.25" fill="rgb(248,248,242)" fill-opacity="0.27"/><rect x="746.62" y="202.66" width="4.37" height="1.25" fill="rgb(249,38,114)" fill-opacity="0.5"/><rect x="751.87" y="202.66" width="17.06" height="1.25" fill="rgb(102,217,239)" fill-opacity="0.42"/><rect x="769.37" y="202.66" width="1.31" height="1.25" fill="rgb(248,248,242)" fill-opacity="0.27"/><rect x="771.99" y="202.66" width="14.00" height="1.25" fill="rgb(117,113,94)" fill-opacity="0.42"/><rect x="724.31" y="204.20" width="4.81" height="1.25" fill="rgb(249,38,114)" fill-opacity="0.5"/><rect x="729.56" y="204.20" width="5.25" height="1.25" fill="rgb(248,248,242)" fill-opacity="0.27"/><rect x="735.69" y="204.20" width="2.19" height="1.25" fill="rgb(249,38,114)" fill-opacity="0.5"/><rect x="738.31" y="204.20" width="13.56" height="1.25" fill="rgb(102,217,239)" fill-opacity="0.42"/><rect x="752.31" y="204.20" width="9.19" height="1.25" fill="rgb(230,219,116)" fill-opacity="0.32"/><rect x="762.37" y="204.20" width="6.12" height="1.25" fill="rgb(248,248,242)" fill-opacity="0.27"/><rect x="770.24" y="204.20" width="15.75" height="1.25" fill="rgb(248,248,242)" fill-opacity="0.27"/><rect x="724.31" y="205.75" width="4.81" height="1.25" fill="rgb(249,38,114)" fill-opacity="0.5"/><rect x="730.00" y="205.75" width="7.44" height="1.25" fill="rgb(248,248,242)" fill-opacity="0.27"/><rect x="721.25" y="207.29" width="1.31" height="1.25" fill="rgb(248,248,242)" fill-opacity="0.27"/><rect x="721.25" y="210.57" width="4.81" height="1.25" fill="rgb(249,38,114)" fill-opacity="0.5"/><rect x="726.50" y="210.57" width="14.00" height="1.25" fill="rgb(102,217,239)" fill-opacity="0.42"/><rect x="740.93" y="210.57" width="13.12" height="1.25" fill="rgb(166,226,46)" fill-opacity="0.42"/><rect x="754.50" y="210.57" width="2.19" height="1.25" fill="rgb(102,217,239)" fill-opacity="0.42"/><rect x="757.56" y="210.57" width="9.62" height="1.25" fill="rgb(253,151,31)" fill-opacity="0.45"/><rect x="721.25" y="212.12" width="1.31" height="1.25" fill="rgb(248,248,242)" fill-opacity="0.27"/><rect x="724.31" y="213.66" width="13.56" height="1.25" fill="rgb(102,217,239)" fill-opacity="0.42"/><rect x="738.75" y="213.66" width="7.44" height="1.25" fill="rgb(248,248,242)" fill-opacity="0.27"/><rect x="746.62" y="213.66" width="4.37" height="1.25" fill="rgb(249,38,114)" fill-opacity="0.5"/><rect x="751.87" y="213.66" width="17.06" height="1.25" fill="rgb(102,217,239)" fill-opacity="0.42"/><rect x="769.37" y="213.66" width="1.31" height="1.25" fill="rgb(248,248,242)" fill-opacity="0.27"/><rect x="771.99" y="213.66" width="14.00" height="1.25" fill="rgb(117,113,94)" fill-opacity="0.42"/><rect x="724.31" y="215.20" width="4.81" height="1.25" fill="rgb(249,38,114)" fill-opacity="0.5"/><rect x="729.56" y="215.20" width="5.25" height="1.25" fill="rgb(248,248,242)" fill-opacity="0.27"/><rect x="735.69" y="215.20" width="2.19" height="1.25" fill="rgb(249,38,114)" fill-opacity="0.5"/><rect x="738.31" y="215.20" width="13.56" height="1.25" fill="rgb(102,217,239)" fill-opacity="0.42"/><rect x="752.31" y="215.20" width="9.19" height="1.25" fill="rgb(230,219,116)" fill-opacity="0.32"/><rect x="762.37" y="215.20" width="6.12" height="1.25" fill="rgb(248,248,242)" fill-opacity="0.27"/><rect x="770.24" y="215.20" width="15.75" height="1.25" fill="rgb(248,248,242)" fill-opacity="0.27"/><rect x="724.31" y="216.75" width="4.81" height="1.25" fill="rgb(249,38,114)" fill-opacity="0.5"/><rect x="730.00" y="216.75" width="7.44" height="1.25" fill="rgb(248,248,242)" fill-opacity="0.27"/><rect x="721.25" y="218.29" width="1.31" height="1.25" fill="rgb(248,248,242)" fill-opacity="0.27"/><rect x="721.25" y="221.38" width="4.81" height="1.25" fill="rgb(249,38,114)" fill-opacity="0.5"/><rect x="726.50" y="221.38" width="14.00" height="1.25" fill="rgb(102,217,239)" fill-opacity="0.42"/><rect x="740.93" y="221.38" width="10.94" height="1.25" fill="rgb(166,226,46)" fill-opacity="0.42"/><rect x="752.31" y="221.38" width="6.56" height="1.25" fill="rgb(102,217,239)" fill-opacity="0.42"/><rect x="759.74" y="221.38" width="3.06" height="1.25" fill="rgb(253,151,31)" fill-opacity="0.45"/><rect x="721.25" y="222.92" width="1.31" height="1.25" fill="rgb(248,248,242)" fill-opacity="0.27"/><rect x="724.31" y="224.46" width="13.56" height="1.25" fill="rgb(102,217,239)" fill-opacity="0.42"/><rect x="738.75" y="224.46" width="7.44" height="1.25" fill="rgb(248,248,242)" fill-opacity="0.27"/><rect x="746.62" y="224.46" width="4.37" height="1.25" fill="rgb(249,38,114)" fill-opacity="0.5"/><rect x="751.87" y="224.46" width="17.06" height="1.25" fill="rgb(102,217,239)" fill-opacity="0.42"/><rect x="769.37" y="224.46" width="1.31" height="1.25" fill="rgb(248,248,242)" fill-opacity="0.27"/><rect x="771.99" y="224.46" width="14.00" height="1.25" fill="rgb(117,113,94)" fill-opacity="0.42"/><rect x="724.31" y="226.00" width="4.81" height="1.25" fill="rgb(249,38,114)" fill-opacity="0.5"/><rect x="729.56" y="226.00" width="5.25" height="1.25" fill="rgb(248,248,242)" fill-opacity="0.27"/><rect x="735.69" y="226.00" width="2.19" height="1.25" fill="rgb(249,38,114)" fill-opacity="0.5"/><rect x="738.31" y="226.00" width="13.56" height="1.25" fill="rgb(102,217,239)" fill-opacity="0.42"/><rect x="752.31" y="226.00" width="9.19" height="1.25" fill="rgb(230,219,116)" fill-opacity="0.32"/><rect x="762.37" y="226.00" width="6.12" height="1.25" fill="rgb(248,248,242)" fill-opacity="0.27"/><rect x="770.24" y="226.00" width="15.75" height="1.25" fill="rgb(248,248,242)" fill-opacity="0.27"/><rect x="724.31" y="227.55" width="10.94" height="1.25" fill="rgb(248,248,242)" fill-opacity="0.27"/><rect x="735.42" y="227.55" width="2.45" height="1.25" fill="rgb(249,38,114)" fill-opacity="0.5"/><rect x="738.31" y="227.55" width="13.56" height="1.25" fill="rgb(102,217,239)" fill-opacity="0.42"/><rect x="752.31" y="227.55" width="14.00" height="1.25" fill="rgb(230,219,116)" fill-opacity="0.32"/><rect x="766.74" y="227.55" width="4.81" height="1.25" fill="rgb(102,217,239)" fill-opacity="0.42"/><rect x="771.99" y="227.55" width="14.00" height="1.25" fill="rgb(248,248,242)" fill-opacity="0.27"/><rect x="724.31" y="229.09" width="10.94" height="1.25" fill="rgb(248,248,242)" fill-opacity="0.27"/><rect x="735.42" y="229.09" width="2.45" height="1.25" fill="rgb(249,38,114)" fill-opacity="0.5"/><rect x="738.31" y="229.09" width="13.56" height="1.25" fill="rgb(102,217,239)" fill-opacity="0.42"/><rect x="752.31" y="229.09" width="16.19" height="1.25" fill="rgb(230,219,116)" fill-opacity="0.32"/><rect x="768.93" y="229.09" width="4.81" height="1.25" fill="rgb(102,217,239)" fill-opacity="0.42"/><rect x="774.18" y="229.09" width="11.81" height="1.25" fill="rgb(248,248,242)" fill-opacity="0.27"/><rect x="724.31" y="230.63" width="10.94" height="1.25" fill="rgb(248,248,242)" fill-opacity="0.27"/><rect x="735.42" y="230.63" width="2.45" height="1.25" fill="rgb(249,38,114)" fill-opacity="0.5"/><rect x="738.31" y="230.63" width="13.56" height="1.25" fill="rgb(102,217,239)" fill-opacity="0.42"/><rect x="752.31" y="230.63" width="11.81" height="1.25" fill="rgb(230,219,116)" fill-opacity="0.32"/><rect x="764.56" y="230.63" width="4.81" height="1.25" fill="rgb(102,217,239)" fill-opacity="0.42"/><rect x="769.81" y="230.63" width="16.19" height="1.25" fill="rgb(248,248,242)" fill-opacity="0.27"/><rect x="724.31" y="232.18" width="10.94" height="1.25" fill="rgb(248,248,242)" fill-opacity="0.27"/><rect x="735.42" y="232.18" width="2.45" height="1.25" fill="rgb(249,38,114)" fill-opacity="0.5"/><rect x="738.31" y="232.18" width="13.56" height="1.25" fill="rgb(102,217,239)" fill-opacity="0.42"/><rect x="752.31" y="232.18" width="14.00" height="1.25" fill="rgb(230,219,116)" fill-opacity="0.32"/><rect x="766.74" y="232.18" width="4.81" height="1.25" fill="rgb(102,217,239)" fill-opacity="0.42"/><rect x="771.99" y="232.18" width="14.00" height="1.25" fill="rgb(248,248,242)" fill-opacity="0.27"/><rect x="724.31" y="233.72" width="4.81" height="1.25" fill="rgb(249,38,114)" fill-opacity="0.5"/><rect x="730.00" y="233.72" width="7.44" height="1.25" fill="rgb(248,248,242)" fill-opacity="0.27"/><rect x="721.25" y="235.26" width="1.31" height="1.25" fill="rgb(248,248,242)" fill-opacity="0.27"/><rect x="721.25" y="238.68" width="4.81" height="1.25" fill="rgb(249,38,114)" fill-opacity="0.5"/><rect x="726.50" y="238.68" width="14.00" height="1.25" fill="rgb(102,217,239)" fill-opacity="0.42"/><rect x="740.93" y="238.68" width="11.37" height="1.25" fill="rgb(166,226,46)" fill-opacity="0.42"/><rect x="752.75" y="238.68" width="6.12" height="1.25" fill="rgb(102,217,239)" fill-opacity="0.42"/><rect x="759.74" y="238.68" width="3.50" height="1.25" fill="rgb(253,151,31)" fill-opacity="0.45"/><rect x="721.25" y="240.22" width="1.31" height="1.25" fill="rgb(248,248,242)" fill-opacity="0.27"/><rect x="724.31" y="241.76" width="13.56" height="1.25" fill="rgb(102,217,239)" fill-opacity="0.42"/><rect x="738.75" y="241.76" width="7.44" height="1.25" fill="rgb(248,248,242)" fill-opacity="0.27"/><rect x="746.62" y="241.76" width="4.37" height="1.25" fill="rgb(249,38,114)" fill-opacity="0.5"/><rect x="751.87" y="241.76" width="17.06" height="1.25" fill="rgb(102,217,239)" fill-opacity="0.42"/><rect x="769.37" y="241.76" width="1.31" height="1.25" fill="rgb(248,248,242)" fill-opacity="0.27"/><rect x="771.99" y="241.76" width="14.00" height="1.25" fill="rgb(117,113,94)" fill-opacity="0.42"/><rect x="724.31" y="243.30" width="4.81" height="1.25" fill="rgb(249,38,114)" fill-opacity="0.5"/><rect x="729.56" y="243.30" width="5.25" height="1.25" fill="rgb(248,248,242)" fill-opacity="0.27"/><rect x="735.69" y="243.30" width="2.19" height="1.25" fill="rgb(249,38,114)" fill-opacity="0.5"/><rect x="738.31" y="243.30" width="13.56" height="1.25" fill="rgb(102,217,239)" fill-opacity="0.42"/><rect x="752.31" y="243.30" width="9.19" height="1.25" fill="rgb(230,219,116)" fill-opacity="0.32"/><rect x="762.37" y="243.30" width="6.12" height="1.25" fill="rgb(248,248,242)" fill-opacity="0.27"/><rect x="770.24" y="243.30" width="15.75" height="1.25" fill="rgb(248,248,242)" fill-opacity="0.27"/><rect x="724.31" y="244.85" width="10.94" height="1.25" fill="rgb(248,248,242)" fill-opacity="0.27"/><rect x="735.42" y="244.85" width="2.45" height="1.25" fill="rgb(249,38,114)" fill-opacity="0.5"/><rect x="738.31" y="244.85" width="13.56" height="1.25" fill="rgb(102,217,239)" fill-opacity="0.42"/><rect x="752.31" y="244.85" width="14.00" height="1.25" fill="rgb(230,219,116)" fill-opacity="0.32"/><rect x="766.74" y="244.85" width="4.81" height="1.25" fill="rgb(102,217,239)" fill-opacity="0.42"/><rect x="771.99" y="244.85" width="14.00" height="1.25" fill="rgb(248,248,242)" fill-opacity="0.27"/><rect x="724.31" y="246.39" width="10.94" height="1.25" fill="rgb(248,248,242)" fill-opacity="0.27"/><rect x="735.42" y="246.39" width="2.45" height="1.25" fill="rgb(249,38,114)" fill-opacity="0.5"/><rect x="738.31" y="246.39" width="13.56" height="1.25" fill="rgb(102,217,239)" fill-opacity="0.42"/><rect x="752.31" y="246.39" width="16.19" height="1.25" fill="rgb(230,219,116)" fill-opacity="0.32"/><rect x="768.93" y="246.39" width="4.81" height="1.25" fill="rgb(102,217,239)" fill-opacity="0.42"/><rect x="774.18" y="246.39" width="11.81" height="1.25" fill="rgb(248,248,242)" fill-opacity="0.27"/><rect x="724.31" y="247.93" width="10.94" height="1.25" fill="rgb(248,248,242)" fill-opacity="0.27"/><rect x="735.42" y="247.93" width="2.45" height="1.25" fill="rgb(249,38,114)" fill-opacity="0.5"/><rect x="738.31" y="247.93" width="13.56" height="1.25" fill="rgb(102,217,239)" fill-opacity="0.42"/><rect x="752.31" y="247.93" width="11.81" height="1.25" fill="rgb(230,219,116)" fill-opacity="0.32"/><rect x="764.56" y="247.93" width="4.81" height="1.25" fill="rgb(102,217,239)" fill-opacity="0.42"/><rect x="769.81" y="247.93" width="16.19" height="1.25" fill="rgb(248,248,242)" fill-opacity="0.27"/><rect x="724.31" y="249.48" width="10.94" height="1.25" fill="rgb(248,248,242)" fill-opacity="0.27"/><rect x="735.42" y="249.48" width="2.45" height="1.25" fill="rgb(249,38,114)" fill-opacity="0.5"/><rect x="738.31" y="249.48" width="13.56" height="1.25" fill="rgb(102,217,239)" fill-opacity="0.42"/><rect x="752.31" y="249.48" width="14.00" height="1.25" fill="rgb(230,219,116)" fill-opacity="0.32"/><rect x="766.74" y="249.48" width="4.81" height="1.25" fill="rgb(102,217,239)" fill-opacity="0.42"/><rect x="771.99" y="249.48" width="14.00" height="1.25" fill="rgb(248,248,242)" fill-opacity="0.27"/><rect x="724.31" y="251.02" width="4.81" height="1.25" fill="rgb(249,38,114)" fill-opacity="0.5"/><rect x="730.00" y="251.02" width="7.44" height="1.25" fill="rgb(248,248,242)" fill-opacity="0.27"/><rect x="721.25" y="252.56" width="1.31" height="1.25" fill="rgb(248,248,242)" fill-opacity="0.27"/><rect x="721.25" y="255.57" width="4.81" height="1.25" fill="rgb(249,38,114)" fill-opacity="0.5"/><rect x="726.50" y="255.57" width="14.00" height="1.25" fill="rgb(102,217,239)" fill-opacity="0.42"/><rect x="740.93" y="255.57" width="11.81" height="1.25" fill="rgb(166,226,46)" fill-opacity="0.42"/><rect x="753.18" y="255.57" width="3.06" height="1.25" fill="rgb(102,217,239)" fill-opacity="0.42"/><rect x="757.12" y="255.57" width="9.62" height="1.25" fill="rgb(253,151,31)" fill-opacity="0.45"/><rect x="721.25" y="257.12" width="1.31" height="1.25" fill="rgb(248,248,242)" fill-opacity="0.27"/><rect x="724.31" y="258.66" width="13.56" height="1.25" fill="rgb(102,217,239)" fill-opacity="0.42"/><rect x="738.75" y="258.66" width="7.44" height="1.25" fill="rgb(248,248,242)" fill-opacity="0.27"/><rect x="746.62" y="258.66" width="4.37" height="1.25" fill="rgb(249,38,114)" fill-opacity="0.5"/><rect x="751.87" y="258.66" width="17.06" height="1.25" fill="rgb(102,217,239)" fill-opacity="0.42"/><rect x="769.37" y="258.66" width="1.31" height="1.25" fill="rgb(248,248,242)" fill-opacity="0.27"/><rect x="771.99" y="258.66" width="14.00" height="1.25" fill="rgb(117,113,94)" fill-opacity="0.42"/><rect x="724.31" y="260.20" width="4.81" height="1.25" fill="rgb(249,38,114)" fill-opacity="0.5"/><rect x="729.56" y="260.20" width="5.25" height="1.25" fill="rgb(248,248,242)" fill-opacity="0.27"/><rect x="735.69" y="260.20" width="2.19" height="1.25" fill="rgb(249,38,114)" fill-opacity="0.5"/><rect x="738.31" y="260.20" width="13.56" height="1.25" fill="rgb(102,217,239)" fill-opacity="0.42"/><rect x="752.31" y="260.20" width="9.19" height="1.25" fill="rgb(230,219,116)" fill-opacity="0.32"/><rect x="762.37" y="260.20" width="6.12" height="1.25" fill="rgb(248,248,242)" fill-opacity="0.27"/><rect x="770.24" y="260.20" width="15.75" height="1.25" fill="rgb(248,248,242)" fill-opacity="0.27"/><rect x="724.31" y="261.75" width="4.81" height="1.25" fill="rgb(249,38,114)" fill-opacity="0.5"/><rect x="730.00" y="261.75" width="7.44" height="1.25" fill="rgb(248,248,242)" fill-opacity="0.27"/><rect x="721.25" y="263.29" width="1.31" height="1.25" fill="rgb(248,248,242)" fill-opacity="0.27"/><rect x="721.25" y="268.07" width="4.81" height="1.25" fill="rgb(249,38,114)" fill-opacity="0.5"/><rect x="726.50" y="268.07" width="14.00" height="1.25" fill="rgb(102,217,239)" fill-opacity="0.42"/><rect x="740.93" y="268.07" width="13.56" height="1.25" fill="rgb(166,226,46)" fill-opacity="0.42"/><rect x="754.93" y="268.07" width="2.19" height="1.25" fill="rgb(102,217,239)" fill-opacity="0.42"/><rect x="757.99" y="268.07" width="9.62" height="1.25" fill="rgb(253,151,31)" fill-opacity="0.45"/><rect x="721.25" y="269.62" width="1.31" height="1.25" fill="rgb(248,248,242)" fill-opacity="0.27"/><rect x="724.31" y="271.16" width="13.56" height="1.25" fill="rgb(102,217,239)" fill-opacity="0.42"/><rect x="738.75" y="271.16" width="7.44" height="1.25" fill="rgb(248,248,242)" fill-opacity="0.27"/><rect x="746.62" y="271.16" width="4.37" height="1.25" fill="rgb(249,38,114)" fill-opacity="0.5"/><rect x="751.87" y="271.16" width="17.06" height="1.25" fill="rgb(102,217,239)" fill-opacity="0.42"/><rect x="769.37" y="271.16" width="1.31" height="1.25" fill="rgb(248,248,242)" fill-opacity="0.27"/><rect x="771.99" y="271.16" width="14.00" height="1.25" fill="rgb(117,113,94)" fill-opacity="0.42"/><rect x="724.31" y="272.70" width="4.81" height="1.25" fill="rgb(249,38,114)" fill-opacity="0.5"/><rect x="729.56" y="272.70" width="5.25" height="1.25" fill="rgb(248,248,242)" fill-opacity="0.27"/><rect x="735.69" y="272.70" width="2.19" height="1.25" fill="rgb(249,38,114)" fill-opacity="0.5"/><rect x="738.31" y="272.70" width="13.56" height="1.25" fill="rgb(102,217,239)" fill-opacity="0.42"/><rect x="752.31" y="272.70" width="9.19" height="1.25" fill="rgb(230,219,116)" fill-opacity="0.32"/><rect x="762.37" y="272.70" width="6.12" height="1.25" fill="rgb(248,248,242)" fill-opacity="0.27"/><rect x="770.24" y="272.70" width="15.75" height="1.25" fill="rgb(248,248,242)" fill-opacity="0.27"/><rect x="724.31" y="274.25" width="4.81" height="1.25" fill="rgb(249,38,114)" fill-opacity="0.5"/><rect x="730.00" y="274.25" width="7.44" height="1.25" fill="rgb(248,248,242)" fill-opacity="0.27"/><rect x="721.25" y="275.79" width="1.31" height="1.25" fill="rgb(248,248,242)" fill-opacity="0.27"/><rect x="721.25" y="278.57" width="4.81" height="1.25" fill="rgb(249,38,114)" fill-opacity="0.5"/><rect x="726.50" y="278.57" width="14.00" height="1.25" fill="rgb(102,217,239)" fill-opacity="0.42"/><rect x="740.93" y="278.57" width="7.87" height="1.25" fill="rgb(166,226,46)" fill-opacity="0.42"/><rect x="749.25" y="278.57" width="7.44" height="1.25" fill="rgb(102,217,239)" fill-opacity="0.42"/><rect x="757.56" y="278.57" width="7.44" height="1.25" fill="rgb(253,151,31)" fill-opacity="0.45"/><rect x="721.25" y="280.12" width="1.31" height="1.25" fill="rgb(248,248,242)" fill-opacity="0.27"/><rect x="724.31" y="281.66" width="13.56" height="1.25" fill="rgb(102,217,239)" fill-opacity="0.42"/><rect x="738.75" y="281.66" width="7.44" height="1.25" fill="rgb(248,248,242)" fill-opacity="0.27"/><rect x="746.62" y="281.66" width="4.37" height="1.25" fill="rgb(249,38,114)" fill-opacity="0.5"/><rect x="751.87" y="281.66" width="17.06" height="1.25" fill="rgb(102,217,239)" fill-opacity="0.42"/><rect x="769.37" y="281.66" width="1.31" height="1.25" fill="rgb(248,248,242)" fill-opacity="0.27"/><rect x="771.99" y="281.66" width="14.00" height="1.25" fill="rgb(117,113,94)" fill-opacity="0.42"/><rect x="724.31" y="283.20" width="4.81" height="1.25" fill="rgb(249,38,114)" fill-opacity="0.5"/><rect x="729.56" y="283.20" width="5.25" height="1.25" fill="rgb(248,248,242)" fill-opacity="0.27"/><rect x="735.69" y="283.20" width="2.19" height="1.25" fill="rgb(249,38,114)" fill-opacity="0.5"/><rect x="738.31" y="283.20" width="13.56" height="1.25" fill="rgb(102,217,239)" fill-opacity="0.42"/><rect x="752.31" y="283.20" width="9.19" height="1.25" fill="rgb(230,219,116)" fill-opacity="0.32"/><rect x="762.37" y="283.20" width="6.12" height="1.25" fill="rgb(248,248,242)" fill-opacity="0.27"/><rect x="770.24" y="283.20" width="15.75" height="1.25" fill="rgb(248,248,242)" fill-opacity="0.27"/><rect x="724.31" y="284.75" width="10.94" height="1.25" fill="rgb(248,248,242)" fill-opacity="0.27"/><rect x="735.42" y="284.75" width="2.45" height="1.25" fill="rgb(249,38,114)" fill-opacity="0.5"/><rect x="738.31" y="284.75" width="13.56" height="1.25" fill="rgb(102,217,239)" fill-opacity="0.42"/><rect x="752.31" y="284.75" width="14.00" height="1.25" fill="rgb(230,219,116)" fill-opacity="0.32"/><rect x="766.74" y="284.75" width="4.81" height="1.25" fill="rgb(102,217,239)" fill-opacity="0.42"/><rect x="771.99" y="284.75" width="14.00" height="1.25" fill="rgb(248,248,242)" fill-opacity="0.27"/><rect x="724.31" y="286.29" width="10.94" height="1.25" fill="rgb(248,248,242)" fill-opacity="0.27"/><rect x="735.42" y="286.29" width="2.45" height="1.25" fill="rgb(249,38,114)" fill-opacity="0.5"/><rect x="738.31" y="286.29" width="13.56" height="1.25" fill="rgb(102,217,239)" fill-opacity="0.42"/><rect x="752.31" y="286.29" width="16.19" height="1.25" fill="rgb(230,219,116)" fill-opacity="0.32"/><rect x="768.93" y="286.29" width="4.81" height="1.25" fill="rgb(102,217,239)" fill-opacity="0.42"/><rect x="774.18" y="286.29" width="11.81" height="1.25" fill="rgb(248,248,242)" fill-opacity="0.27"/><rect x="724.31" y="287.83" width="10.94" height="1.25" fill="rgb(248,248,242)" fill-opacity="0.27"/><rect x="735.42" y="287.83" width="2.45" height="1.25" fill="rgb(249,38,114)" fill-opacity="0.5"/><rect x="738.31" y="287.83" width="13.56" height="1.25" fill="rgb(102,217,239)" fill-opacity="0.42"/><rect x="752.31" y="287.83" width="11.81" height="1.25" fill="rgb(230,219,116)" fill-opacity="0.32"/><rect x="764.56" y="287.83" width="4.81" height="1.25" fill="rgb(102,217,239)" fill-opacity="0.42"/><rect x="769.81" y="287.83" width="16.19" height="1.25" fill="rgb(248,248,242)" fill-opacity="0.27"/><rect x="724.31" y="289.38" width="10.94" height="1.25" fill="rgb(248,248,242)" fill-opacity="0.27"/><rect x="735.42" y="289.38" width="2.45" height="1.25" fill="rgb(249,38,114)" fill-opacity="0.5"/><rect x="738.31" y="289.38" width="13.56" height="1.25" fill="rgb(102,217,239)" fill-opacity="0.42"/><rect x="752.31" y="289.38" width="14.00" height="1.25" fill="rgb(230,219,116)" fill-opacity="0.32"/><rect x="766.74" y="289.38" width="4.81" height="1.25" fill="rgb(102,217,239)" fill-opacity="0.42"/><rect x="771.99" y="289.38" width="14.00" height="1.25" fill="rgb(248,248,242)" fill-opacity="0.27"/><rect x="724.31" y="290.92" width="10.94" height="1.25" fill="rgb(248,248,242)" fill-opacity="0.27"/><rect x="735.42" y="290.92" width="2.45" height="1.25" fill="rgb(249,38,114)" fill-opacity="0.5"/><rect x="738.31" y="290.92" width="13.56" height="1.25" fill="rgb(102,217,239)" fill-opacity="0.42"/><rect x="752.31" y="290.92" width="16.19" height="1.25" fill="rgb(230,219,116)" fill-opacity="0.32"/><rect x="768.93" y="290.92" width="4.81" height="1.25" fill="rgb(102,217,239)" fill-opacity="0.42"/><rect x="774.18" y="290.92" width="11.81" height="1.25" fill="rgb(248,248,242)" fill-opacity="0.27"/><rect x="724.31" y="292.46" width="10.94" height="1.25" fill="rgb(248,248,242)" fill-opacity="0.27"/><rect x="735.42" y="292.46" width="2.45" height="1.25" fill="rgb(249,38,114)" fill-opacity="0.5"/><rect x="738.31" y="292.46" width="13.56" height="1.25" fill="rgb(102,217,239)" fill-opacity="0.42"/><rect x="752.31" y="292.46" width="11.81" height="1.25" fill="rgb(230,219,116)" fill-opacity="0.32"/><rect x="764.56" y="292.46" width="4.81" height="1.25" fill="rgb(102,217,239)" fill-opacity="0.42"/><rect x="769.81" y="292.46" width="16.19" height="1.25" fill="rgb(248,248,242)" fill-opacity="0.27"/><rect x="724.31" y="294.00" width="10.94" height="1.25" fill="rgb(248,248,242)" fill-opacity="0.27"/><rect x="735.42" y="294.00" width="2.45" height="1.25" fill="rgb(249,38,114)" fill-opacity="0.5"/><rect x="738.31" y="294.00" width="13.56" height="1.25" fill="rgb(102,217,239)" fill-opacity="0.42"/><rect x="752.31" y="294.00" width="14.00" height="1.25" fill="rgb(230,219,116)" fill-opacity="0.32"/><rect x="766.74" y="294.00" width="4.81" height="1.25" fill="rgb(102,217,239)" fill-opacity="0.42"/><rect x="771.99" y="294.00" width="14.00" height="1.25" fill="rgb(248,248,242)" fill-opacity="0.27"/><rect x="724.31" y="295.55" width="10.94" height="1.25" fill="rgb(248,248,242)" fill-opacity="0.27"/><rect x="735.42" y="295.55" width="2.45" height="1.25" fill="rgb(249,38,114)" fill-opacity="0.5"/><rect x="738.31" y="295.55" width="13.56" height="1.25" fill="rgb(102,217,239)" fill-opacity="0.42"/><rect x="752.31" y="295.55" width="16.19" height="1.25" fill="rgb(230,219,116)" fill-opacity="0.32"/><rect x="768.93" y="295.55" width="4.81" height="1.25" fill="rgb(102,217,239)" fill-opacity="0.42"/><rect x="774.18" y="295.55" width="11.81" height="1.25" fill="rgb(248,248,242)" fill-opacity="0.27"/><rect x="724.31" y="297.09" width="10.94" height="1.25" fill="rgb(248,248,242)" fill-opacity="0.27"/><rect x="735.42" y="297.09" width="2.45" height="1.25" fill="rgb(249,38,114)" fill-opacity="0.5"/><rect x="738.31" y="297.09" width="13.56" height="1.25" fill="rgb(102,217,239)" fill-opacity="0.42"/><rect x="752.31" y="297.09" width="11.81" height="1.25" fill="rgb(230,219,116)" fill-opacity="0.32"/><rect x="764.56" y="297.09" width="4.81" height="1.25" fill="rgb(102,217,239)" fill-opacity="0.42"/><rect x="769.81" y="297.09" width="16.19" height="1.25" fill="rgb(248,248,242)" fill-opacity="0.27"/><rect x="724.31" y="298.63" width="10.94" height="1.25" fill="rgb(248,248,242)" fill-opacity="0.27"/><rect x="735.42" y="298.63" width="2.45" height="1.25" fill="rgb(249,38,114)" fill-opacity="0.5"/><rect x="738.31" y="298.63" width="13.56" height="1.25" fill="rgb(102,217,239)" fill-opacity="0.42"/><rect x="752.31" y="298.63" width="14.00" height="1.25" fill="rgb(230,219,116)" fill-opacity="0.32"/><rect x="766.74" y="298.63" width="4.81" height="1.25" fill="rgb(102,217,239)" fill-opacity="0.42"/><rect x="771.99" y="298.63" width="14.00" height="1.25" fill="rgb(248,248,242)" fill-opacity="0.27"/><rect x="724.31" y="300.18" width="4.81" height="1.25" fill="rgb(249,38,114)" fill-opacity="0.5"/><rect x="730.00" y="300.18" width="7.44" height="1.25" fill="rgb(248,248,242)" fill-opacity="0.27"/><rect x="721.25" y="301.72" width="1.31" height="1.25" fill="rgb(248,248,242)" fill-opacity="0.27"/><rect x="721.69" y="311.57" width="22.31" height="1.25" fill="rgb(117,113,94)" fill-opacity="0.42"/><rect x="721.69" y="314.18" width="51.62" height="1.25" fill="rgb(117,113,94)" fill-opacity="0.42"/><rect x="721.69" y="315.98" width="8.31" height="1.25" fill="rgb(117,113,94)" fill-opacity="0.42"/><rect x="721.25" y="320.77" width="4.43" height="1.25" fill="rgb(249,38,114)" fill-opacity="0.5"/><rect x="726.42" y="320.77" width="2.95" height="1.25" fill="rgb(102,217,239)" fill-opacity="0.42"/><rect x="730.11" y="320.77" width="8.86" height="1.25" fill="rgb(166,226,46)" fill-opacity="0.42"/><rect x="738.96" y="320.77" width="0.74" height="1.25" fill="rgb(248,248,242)" fill-opacity="0.27"/><rect x="739.70" y="320.77" width="2.21" height="1.25" fill="rgb(102,217,239)" fill-opacity="0.42"/><rect x="742.65" y="320.77" width="2.95" height="1.25" fill="rgb(253,151,31)" fill-opacity="0.45"/><rect x="745.61" y="320.77" width="0.74" height="1.25" fill="rgb(248,248,242)" fill-opacity="0.27"/><rect x="747.08" y="320.77" width="4.43" height="1.25" fill="rgb(102,217,239)" fill-opacity="0.42"/><rect x="752.25" y="320.77" width="8.12" height="1.25" fill="rgb(253,151,31)" fill-opacity="0.45"/><rect x="760.37" y="320.77" width="0.74" height="1.25" fill="rgb(248,248,242)" fill-opacity="0.27"/><rect x="761.84" y="320.77" width="2.21" height="1.25" fill="rgb(102,217,239)" fill-opacity="0.42"/><rect x="764.79" y="320.77" width="6.64" height="1.25" fill="rgb(253,151,31)" fill-opacity="0.45"/><rect x="771.44" y="320.77" width="0.74" height="1.25" fill="rgb(248,248,242)" fill-opacity="0.27"/><rect x="772.91" y="320.77" width="4.43" height="1.25" fill="rgb(249,38,114)" fill-opacity="0.5"/><rect x="778.08" y="320.77" width="15.50" height="1.25" fill="rgb(102,217,239)" fill-opacity="0.42"/><rect x="721.25" y="322.32" width="0.74" height="1.25" fill="rgb(248,248,242)" fill-opacity="0.27"/><rect x="724.20" y="323.86" width="8.86" height="1.25" fill="rgb(102,217,239)" fill-opacity="0.42"/><rect x="733.80" y="323.86" width="8.86" height="1.25" fill="rgb(248,248,242)" fill-opacity="0.27"/><rect x="743.39" y="323.86" width="0.74" height="1.25" fill="rgb(249,38,114)" fill-opacity="0.5"/><rect x="744.87" y="323.86" width="2.21" height="1.25" fill="rgb(249,38,114)" fill-opacity="0.5"/><rect x="747.82" y="323.86" width="8.86" height="1.25" fill="rgb(102,217,239)" fill-opacity="0.42"/><rect x="756.68" y="323.86" width="0.74" height="1.25" fill="rgb(248,248,242)" fill-opacity="0.27"/><rect x="757.41" y="323.86" width="1.48" height="1.25" fill="rgb(230,219,116)" fill-opacity="0.32"/><rect x="758.89" y="323.86" width="1.48" height="1.25" fill="rgb(248,248,242)" fill-opacity="0.27"/><rect x="724.20" y="325.40" width="10.33" height="1.25" fill="rgb(102,217,239)" fill-opacity="0.42"/><rect x="735.27" y="325.40" width="10.33" height="1.25" fill="rgb(248,248,242)" fill-opacity="0.27"/><rect x="746.34" y="325.40" width="0.74" height="1.25" fill="rgb(249,38,114)" fill-opacity="0.5"/><rect x="747.82" y="325.40" width="2.95" height="1.25" fill="rgb(174,129,255)" fill-opacity="0.45"/><rect x="750.77" y="325.40" width="0.74" height="1.25" fill="rgb(248,248,242)" fill-opacity="0.27"/><rect x="724.20" y="328.49" width="11.81" height="1.25" fill="rgb(117,113,94)" fill-opacity="0.42"/><rect x="736.75" y="328.49" width="1.48" height="1.25" fill="rgb(117,113,94)" fill-opacity="0.42"/><rect x="738.96" y="328.49" width="5.90" height="1.25" fill="rgb(117,113,94)" fill-opacity="0.42"/><rect x="745.61" y="328.49" width="1.48" height="1.25" fill="rgb(117,113,94)" fill-opacity="0.42"/><rect x="747.82" y="328.49" width="1.48" height="1.25" fill="rgb(117,113,94)" fill-opacity="0.42"/><rect x="750.03" y="328.49" width="5.17" height="1.25" fill="rgb(117,113,94)" fill-opacity="0.42"/><rect x="755.94" y="328.49" width="2.95" height="1.25" fill="rgb(117,113,94)" fill-opacity="0.42"/><rect x="724.20" y="330.03" width="7.38" height="1.25" fill="rgb(102,217,239)" fill-opacity="0.42"/><rect x="732.32" y="330.03" width="10.33" height="1.25" fill="rgb(248,248,242)" fill-opacity="0.27"/><rect x="743.39" y="330.03" width="0.74" height="1.25" fill="rgb(249,38,114)" fill-opacity="0.5"/><rect x="744.87" y="330.03" width="2.21" height="1.25" fill="rgb(249,38,114)" fill-opacity="0.5"/><rect x="747.82" y="330.03" width="11.07" height="1.25" fill="rgb(102,217,239)" fill-opacity="0.42"/><rect x="758.89" y="330.03" width="2.21" height="1.25" fill="rgb(248,248,242)" fill-opacity="0.27"/><rect x="724.20" y="333.12" width="11.07" height="1.25" fill="rgb(117,113,94)" fill-opacity="0.42"/><rect x="736.01" y="333.12" width="2.21" height="1.25" fill="rgb(117,113,94)" fill-opacity="0.42"/><rect x="738.96" y="333.12" width="5.90" height="1.25" fill="rgb(117,113,94)" fill-opacity="0.42"/><rect x="745.61" y="333.12" width="1.48" height="1.25" fill="rgb(117,113,94)" fill-opacity="0.42"/><rect x="747.82" y="333.12" width="1.48" height="1.25" fill="rgb(117,113,94)" fill-opacity="0.42"/><rect x="750.03" y="333.12" width="5.90" height="1.25" fill="rgb(117,113,94)" fill-opacity="0.42"/><rect x="724.20" y="334.66" width="14.76" height="1.25" fill="rgb(102,217,239)" fill-opacity="0.42"/><rect x="738.96" y="334.66" width="0.74" height="1.25" fill="rgb(249,38,114)" fill-opacity="0.5"/><rect x="739.70" y="334.66" width="26.57" height="1.25" fill="rgb(248,248,242)" fill-opacity="0.27"/><rect x="767.01" y="334.66" width="3.69" height="1.25" fill="rgb(174,129,255)" fill-opacity="0.45"/><rect x="770.70" y="334.66" width="1.48" height="1.25" fill="rgb(248,248,242)" fill-opacity="0.27"/><rect x="772.91" y="334.66" width="4.43" height="1.25" fill="rgb(117,113,94)" fill-opacity="0.42"/><rect x="778.08" y="334.66" width="2.21" height="1.25" fill="rgb(117,113,94)" fill-opacity="0.42"/><rect x="781.03" y="334.66" width="5.17" height="1.25" fill="rgb(117,113,94)" fill-opacity="0.42"/><rect x="724.20" y="336.20" width="14.76" height="1.25" fill="rgb(102,217,239)" fill-opacity="0.42"/><rect x="738.96" y="336.20" width="0.74" height="1.25" fill="rgb(249,38,114)" fill-opacity="0.5"/><rect x="739.70" y="336.20" width="20.66" height="1.25" fill="rgb(248,248,242)" fill-opacity="0.27"/><rect x="761.10" y="336.20" width="3.69" height="1.25" fill="rgb(174,129,255)" fill-opacity="0.45"/><rect x="764.79" y="336.20" width="1.48" height="1.25" fill="rgb(248,248,242)" fill-opacity="0.27"/><rect x="767.01" y="336.20" width="4.43" height="1.25" fill="rgb(117,113,94)" fill-opacity="0.42"/><rect x="772.17" y="336.20" width="2.21" height="1.25" fill="rgb(117,113,94)" fill-opacity="0.42"/><rect x="775.13" y="336.20" width="5.17" height="1.25" fill="rgb(117,113,94)" fill-opacity="0.42"/><rect x="781.03" y="336.20" width="4.43" height="1.25" fill="rgb(117,113,94)" fill-opacity="0.42"/><rect x="724.20" y="339.29" width="2.21" height="1.25" fill="rgb(249,38,114)" fill-opacity="0.5"/><rect x="724.20" y="340.83" width="0.74" height="1.25" fill="rgb(248,248,242)" fill-opacity="0.27"/><rect x="727.16" y="342.38" width="7.38" height="1.25" fill="rgb(102,217,239)" fill-opacity="0.42"/><rect x="735.27" y="342.38" width="7.38" height="1.25" fill="rgb(248,248,242)" fill-opacity="0.27"/><rect x="743.39" y="342.38" width="0.74" height="1.25" fill="rgb(249,38,114)" fill-opacity="0.5"/><rect x="744.87" y="342.38" width="2.21" height="1.25" fill="rgb(249,38,114)" fill-opacity="0.5"/><rect x="747.82" y="342.38" width="12.55" height="1.25" fill="rgb(102,217,239)" fill-opacity="0.42"/><rect x="760.37" y="342.38" width="2.21" height="1.25" fill="rgb(248,248,242)" fill-opacity="0.27"/><rect x="763.32" y="342.38" width="5.90" height="1.25" fill="rgb(117,113,94)" fill-opacity="0.42"/><rect x="769.96" y="342.38" width="2.21" height="1.25" fill="rgb(117,113,94)" fill-opacity="0.42"/><rect x="772.91" y="342.38" width="4.43" height="1.25" fill="rgb(117,113,94)" fill-opacity="0.42"/><rect x="727.16" y="343.92" width="5.90" height="1.25" fill="rgb(102,217,239)" fill-opacity="0.42"/><rect x="733.80" y="343.92" width="5.90" height="1.25" fill="rgb(248,248,242)" fill-opacity="0.27"/><rect x="740.44" y="343.92" width="0.74" height="1.25" fill="rgb(249,38,114)" fill-opacity="0.5"/><rect x="741.92" y="343.92" width="2.21" height="1.25" fill="rgb(249,38,114)" fill-opacity="0.5"/><rect x="744.87" y="343.92" width="5.90" height="1.25" fill="rgb(102,217,239)" fill-opacity="0.42"/><rect x="750.77" y="343.92" width="5.17" height="1.25" fill="rgb(248,248,242)" fill-opacity="0.27"/><rect x="727.16" y="347.01" width="14.02" height="1.25" fill="rgb(102,217,239)" fill-opacity="0.42"/><rect x="741.92" y="347.01" width="10.33" height="1.25" fill="rgb(248,248,242)" fill-opacity="0.27"/><rect x="752.99" y="347.01" width="0.74" height="1.25" fill="rgb(249,38,114)" fill-opacity="0.5"/><rect x="754.46" y="347.01" width="2.95" height="1.25" fill="rgb(174,129,255)" fill-opacity="0.45"/><rect x="757.41" y="347.01" width="0.74" height="1.25" fill="rgb(248,248,242)" fill-opacity="0.27"/><rect x="727.16" y="350.09" width="4.43" height="1.25" fill="rgb(249,38,114)" fill-opacity="0.5"/><rect x="731.58" y="350.09" width="8.12" height="1.25" fill="rgb(248,248,242)" fill-opacity="0.27"/><rect x="727.16" y="351.63" width="0.74" height="1.25" fill="rgb(248,248,242)" fill-opacity="0.27"/><rect x="730.11" y="353.18" width="2.95" height="1.25" fill="rgb(249,38,114)" fill-opacity="0.5"/><rect x="733.80" y="353.18" width="0.74" height="1.25" fill="rgb(174,129,255)" fill-opacity="0.45"/><rect x="735.27" y="353.18" width="0.74" height="1.25" fill="rgb(249,38,114)" fill-opacity="0.5"/><rect x="730.11" y="354.72" width="10.33" height="1.25" fill="rgb(248,248,242)" fill-opacity="0.27"/><rect x="741.18" y="354.72" width="0.74" height="1.25" fill="rgb(249,38,114)" fill-opacity="0.5"/><rect x="742.65" y="354.72" width="2.95" height="1.25" fill="rgb(174,129,255)" fill-opacity="0.45"/><rect x="745.61" y="354.72" width="0.74" height="1.25" fill="rgb(248,248,242)" fill-opacity="0.27"/><rect x="730.11" y="356.26" width="3.69" height="1.25" fill="rgb(249,38,114)" fill-opacity="0.5"/><rect x="733.80" y="356.26" width="0.74" height="1.25" fill="rgb(248,248,242)" fill-opacity="0.27"/><rect x="730.11" y="359.35" width="2.95" height="1.25" fill="rgb(249,38,114)" fill-opacity="0.5"/><rect x="733.80" y="359.35" width="0.74" height="1.25" fill="rgb(174,129,255)" fill-opacity="0.45"/><rect x="735.27" y="359.35" width="0.74" height="1.25" fill="rgb(249,38,114)" fill-opacity="0.5"/><rect x="730.11" y="360.89" width="10.33" height="1.25" fill="rgb(248,248,242)" fill-opacity="0.27"/><rect x="741.18" y="360.89" width="0.74" height="1.25" fill="rgb(249,38,114)" fill-opacity="0.5"/><rect x="742.65" y="360.89" width="14.76" height="1.25" fill="rgb(248,248,242)" fill-opacity="0.27"/><rect x="757.41" y="360.89" width="4.43" height="1.25" fill="rgb(102,217,239)" fill-opacity="0.42"/><rect x="761.84" y="360.89" width="0.74" height="1.25" fill="rgb(248,248,242)" fill-opacity="0.27"/><rect x="763.32" y="360.89" width="9.59" height="1.25" fill="rgb(248,248,242)" fill-opacity="0.27"/><rect x="730.11" y="362.44" width="3.69" height="1.25" fill="rgb(249,38,114)" fill-opacity="0.5"/><rect x="733.80" y="362.44" width="0.74" height="1.25" fill="rgb(248,248,242)" fill-opacity="0.27"/><rect x="730.11" y="365.52" width="2.95" height="1.25" fill="rgb(249,38,114)" fill-opacity="0.5"/><rect x="733.80" y="365.52" width="0.74" height="1.25" fill="rgb(174,129,255)" fill-opacity="0.45"/><rect x="735.27" y="365.52" width="0.74" height="1.25" fill="rgb(249,38,114)" fill-opacity="0.5"/><rect x="730.11" y="367.06" width="10.33" height="1.25" fill="rgb(248,248,242)" fill-opacity="0.27"/><rect x="741.18" y="367.06" width="0.74" height="1.25" fill="rgb(249,38,114)" fill-opacity="0.5"/><rect x="742.65" y="367.06" width="14.02" height="1.25" fill="rgb(248,248,242)" fill-opacity="0.27"/><rect x="756.68" y="367.06" width="5.17" height="1.25" fill="rgb(102,217,239)" fill-opacity="0.42"/><rect x="761.84" y="367.06" width="0.74" height="1.25" fill="rgb(248,248,242)" fill-opacity="0.27"/><rect x="763.32" y="367.06" width="9.59" height="1.25" fill="rgb(248,248,242)" fill-opacity="0.27"/><rect x="730.11" y="368.61" width="3.69" height="1.25" fill="rgb(249,38,114)" fill-opacity="0.5"/><rect x="733.80" y="368.61" width="0.74" height="1.25" fill="rgb(248,248,242)" fill-opacity="0.27"/><rect x="730.11" y="371.69" width="2.95" height="1.25" fill="rgb(249,38,114)" fill-opacity="0.5"/><rect x="733.80" y="371.69" width="0.74" height="1.25" fill="rgb(174,129,255)" fill-opacity="0.45"/><rect x="735.27" y="371.69" width="0.74" height="1.25" fill="rgb(249,38,114)" fill-opacity="0.5"/><rect x="730.11" y="373.24" width="10.33" height="1.25" fill="rgb(248,248,242)" fill-opacity="0.27"/><rect x="741.18" y="373.24" width="0.74" height="1.25" fill="rgb(249,38,114)" fill-opacity="0.5"/><rect x="742.65" y="373.24" width="12.55" height="1.25" fill="rgb(248,248,242)" fill-opacity="0.27"/><rect x="755.20" y="373.24" width="5.90" height="1.25" fill="rgb(102,217,239)" fill-opacity="0.42"/><rect x="761.10" y="373.24" width="0.74" height="1.25" fill="rgb(248,248,242)" fill-opacity="0.27"/><rect x="762.58" y="373.24" width="9.59" height="1.25" fill="rgb(248,248,242)" fill-opacity="0.27"/><rect x="730.11" y="374.78" width="3.69" height="1.25" fill="rgb(249,38,114)" fill-opacity="0.5"/><rect x="733.80" y="374.78" width="0.74" height="1.25" fill="rgb(248,248,242)" fill-opacity="0.27"/><rect x="730.11" y="377.87" width="2.95" height="1.25" fill="rgb(249,38,114)" fill-opacity="0.5"/><rect x="733.80" y="377.87" width="0.74" height="1.25" fill="rgb(174,129,255)" fill-opacity="0.45"/><rect x="735.27" y="377.87" width="0.74" height="1.25" fill="rgb(249,38,114)" fill-opacity="0.5"/><rect x="730.00" y="379.41" width="10.94" height="1.25" fill="rgb(248,248,242)" fill-opacity="0.27"/><rect x="741.37" y="379.41" width="0.87" height="1.25" fill="rgb(249,38,114)" fill-opacity="0.5"/><rect x="742.68" y="379.41" width="12.25" height="1.25" fill="rgb(248,248,242)" fill-opacity="0.27"/><rect x="754.93" y="379.41" width="6.12" height="1.25" fill="rgb(102,217,239)" fill-opacity="0.42"/><rect x="761.76" y="379.41" width="9.80" height="1.25" fill="rgb(248,248,242)" fill-opacity="0.27"/><rect x="730.00" y="380.95" width="4.37" height="1.25" fill="rgb(249,38,114)" fill-opacity="0.5"/><rect x="730.00" y="384.04" width="3.50" height="1.25" fill="rgb(249,38,114)" fill-opacity="0.5"/><rect x="733.94" y="384.04" width="0.87" height="1.25" fill="rgb(174,129,255)" fill-opacity="0.45"/><rect x="735.69" y="384.04" width="0.44" height="1.25" fill="rgb(249,38,114)" fill-opacity="0.5"/><rect x="730.00" y="385.58" width="10.94" height="1.25" fill="rgb(248,248,242)" fill-opacity="0.27"/><rect x="741.37" y="385.58" width="0.87" height="1.25" fill="rgb(249,38,114)" fill-opacity="0.5"/><rect x="742.68" y="385.58" width="12.25" height="1.25" fill="rgb(248,248,242)" fill-opacity="0.27"/><rect x="754.93" y="385.58" width="6.12" height="1.25" fill="rgb(102,217,239)" fill-opacity="0.42"/><rect x="761.76" y="385.58" width="9.80" height="1.25" fill="rgb(248,248,242)" fill-opacity="0.27"/><rect x="730.00" y="387.12" width="4.37" height="1.25" fill="rgb(249,38,114)" fill-opacity="0.5"/><rect x="730.00" y="390.21" width="3.50" height="1.25" fill="rgb(249,38,114)" fill-opacity="0.5"/><rect x="733.94" y="390.21" width="0.87" height="1.25" fill="rgb(174,129,255)" fill-opacity="0.45"/><rect x="735.69" y="390.21" width="0.44" height="1.25" fill="rgb(249,38,114)" fill-opacity="0.5"/><rect x="730.00" y="391.75" width="10.94" height="1.25" fill="rgb(248,248,242)" fill-opacity="0.27"/><rect x="741.37" y="391.75" width="0.87" height="1.25" fill="rgb(249,38,114)" fill-opacity="0.5"/><rect x="742.68" y="391.75" width="12.69" height="1.25" fill="rgb(248,248,242)" fill-opacity="0.27"/><rect x="755.81" y="391.75" width="5.25" height="1.25" fill="rgb(102,217,239)" fill-opacity="0.42"/><rect x="761.76" y="391.75" width="9.80" height="1.25" fill="rgb(248,248,242)" fill-opacity="0.27"/><rect x="730.00" y="393.30" width="4.37" height="1.25" fill="rgb(249,38,114)" fill-opacity="0.5"/><rect x="730.00" y="396.38" width="3.50" height="1.25" fill="rgb(249,38,114)" fill-opacity="0.5"/><rect x="733.94" y="396.38" width="0.87" height="1.25" fill="rgb(174,129,255)" fill-opacity="0.45"/><rect x="735.69" y="396.38" width="0.44" height="1.25" fill="rgb(249,38,114)" fill-opacity="0.5"/><rect x="730.00" y="397.92" width="10.94" height="1.25" fill="rgb(248,248,242)" fill-opacity="0.27"/><rect x="741.37" y="397.92" width="0.87" height="1.25" fill="rgb(249,38,114)" fill-opacity="0.5"/><rect x="742.68" y="397.92" width="14.00" height="1.25" fill="rgb(248,248,242)" fill-opacity="0.27"/><rect x="757.12" y="397.92" width="5.69" height="1.25" fill="rgb(102,217,239)" fill-opacity="0.42"/><rect x="763.51" y="397.92" width="9.36" height="1.25" fill="rgb(248,248,242)" fill-opacity="0.27"/><rect x="730.00" y="399.47" width="4.37" height="1.25" fill="rgb(249,38,114)" fill-opacity="0.5"/><rect x="730.00" y="402.55" width="3.50" height="1.25" fill="rgb(249,38,114)" fill-opacity="0.5"/><rect x="733.94" y="402.55" width="0.87" height="1.25" fill="rgb(174,129,255)" fill-opacity="0.45"/><rect x="735.69" y="402.55" width="0.44" height="1.25" fill="rgb(249,38,114)" fill-opacity="0.5"/><rect x="730.00" y="404.10" width="10.94" height="1.25" fill="rgb(248,248,242)" fill-opacity="0.27"/><rect x="741.37" y="404.10" width="0.87" height="1.25" fill="rgb(249,38,114)" fill-opacity="0.5"/><rect x="742.68" y="404.10" width="7.87" height="1.25" fill="rgb(248,248,242)" fill-opacity="0.27"/><rect x="751.00" y="404.10" width="7.87" height="1.25" fill="rgb(102,217,239)" fill-opacity="0.42"/><rect x="759.57" y="404.10" width="9.80" height="1.25" fill="rgb(248,248,242)" fill-opacity="0.27"/><rect x="730.00" y="405.64" width="4.37" height="1.25" fill="rgb(249,38,114)" fill-opacity="0.5"/><rect x="730.00" y="408.73" width="3.50" height="1.25" fill="rgb(249,38,114)" fill-opacity="0.5"/><rect x="733.94" y="408.73" width="0.87" height="1.25" fill="rgb(174,129,255)" fill-opacity="0.45"/><rect x="735.69" y="408.73" width="0.44" height="1.25" fill="rgb(249,38,114)" fill-opacity="0.5"/><rect x="730.00" y="410.27" width="10.94" height="1.25" fill="rgb(248,248,242)" fill-opacity="0.27"/><rect x="741.37" y="410.27" width="0.87" height="1.25" fill="rgb(249,38,114)" fill-opacity="0.5"/><rect x="742.68" y="410.27" width="3.50" height="1.25" fill="rgb(174,129,255)" fill-opacity="0.45"/><rect x="747.06" y="410.27" width="16.19" height="1.25" fill="rgb(117,113,94)" fill-opacity="0.42"/><rect x="730.00" y="411.81" width="4.37" height="1.25" fill="rgb(249,38,114)" fill-opacity="0.5"/><rect x="730.00" y="414.90" width="6.12" height="1.25" fill="rgb(249,38,114)" fill-opacity="0.5"/><rect x="730.00" y="416.44" width="10.94" height="1.25" fill="rgb(248,248,242)" fill-opacity="0.27"/><rect x="741.37" y="416.44" width="0.87" height="1.25" fill="rgb(249,38,114)" fill-opacity="0.5"/><rect x="742.68" y="416.44" width="3.50" height="1.25" fill="rgb(174,129,255)" fill-opacity="0.45"/><rect x="730.00" y="417.98" width="4.37" height="1.25" fill="rgb(249,38,114)" fill-opacity="0.5"/><rect x="727.20" y="419.53" width="1.05" height="1.25" fill="rgb(248,248,242)" fill-opacity="0.27"/><rect x="727.20" y="422.61" width="15.05" height="1.25" fill="rgb(102,217,239)" fill-opacity="0.42"/><rect x="742.68" y="422.61" width="7.87" height="1.25" fill="rgb(248,248,242)" fill-opacity="0.27"/><rect x="751.00" y="422.61" width="3.50" height="1.25" fill="rgb(249,38,114)" fill-opacity="0.5"/><rect x="754.93" y="422.61" width="14.87" height="1.25" fill="rgb(102,217,239)" fill-opacity="0.42"/><rect x="769.81" y="422.61" width="11.81" height="1.25" fill="rgb(248,248,242)" fill-opacity="0.27"/><rect x="727.20" y="424.16" width="5.86" height="1.25" fill="rgb(248,248,242)" fill-opacity="0.27"/><rect x="733.06" y="424.16" width="0.44" height="1.25" fill="rgb(249,38,114)" fill-opacity="0.5"/><rect x="733.50" y="424.16" width="16.19" height="1.25" fill="rgb(248,248,242)" fill-opacity="0.27"/><rect x="727.20" y="427.24" width="9.36" height="1.25" fill="rgb(102,217,239)" fill-opacity="0.42"/><rect x="737.00" y="427.24" width="8.75" height="1.25" fill="rgb(248,248,242)" fill-opacity="0.27"/><rect x="746.18" y="427.24" width="0.87" height="1.25" fill="rgb(249,38,114)" fill-opacity="0.5"/><rect x="747.50" y="427.24" width="21.00" height="1.25" fill="rgb(248,248,242)" fill-opacity="0.27"/><rect x="770.24" y="427.24" width="15.75" height="1.25" fill="rgb(117,113,94)" fill-opacity="0.42"/><rect x="727.20" y="428.78" width="7.61" height="1.25" fill="rgb(102,217,239)" fill-opacity="0.42"/><rect x="735.25" y="428.78" width="4.81" height="1.25" fill="rgb(248,248,242)" fill-opacity="0.27"/><rect x="740.50" y="428.78" width="0.87" height="1.25" fill="rgb(249,38,114)" fill-opacity="0.5"/><rect x="741.81" y="428.78" width="17.94" height="1.25" fill="rgb(248,248,242)" fill-opacity="0.27"/><rect x="760.62" y="428.78" width="25.37" height="1.25" fill="rgb(117,113,94)" fill-opacity="0.42"/><rect x="727.20" y="431.87" width="31.67" height="1.25" fill="rgb(117,113,94)" fill-opacity="0.42"/><rect x="727.20" y="433.41" width="5.42" height="1.25" fill="rgb(102,217,239)" fill-opacity="0.42"/><rect x="733.06" y="433.41" width="3.50" height="1.25" fill="rgb(248,248,242)" fill-opacity="0.27"/><rect x="737.00" y="433.41" width="1.31" height="1.25" fill="rgb(249,38,114)" fill-opacity="0.5"/><rect x="738.75" y="433.41" width="8.31" height="1.25" fill="rgb(102,217,239)" fill-opacity="0.42"/><rect x="747.50" y="433.41" width="12.25" height="1.25" fill="rgb(248,248,242)" fill-opacity="0.27"/><rect x="724.31" y="436.50" width="0.87" height="1.25" fill="rgb(248,248,242)" fill-opacity="0.27"/><rect x="725.19" y="436.50" width="3.94" height="1.25" fill="rgb(249,38,114)" fill-opacity="0.5"/><rect x="729.56" y="436.50" width="7.87" height="1.25" fill="rgb(102,217,239)" fill-opacity="0.42"/><rect x="737.87" y="436.50" width="3.94" height="1.25" fill="rgb(248,248,242)" fill-opacity="0.27"/><rect x="724.31" y="441.13" width="2.62" height="1.25" fill="rgb(249,38,114)" fill-opacity="0.5"/><rect x="724.31" y="442.67" width="0.87" height="1.25" fill="rgb(248,248,242)" fill-opacity="0.27"/><rect x="727.20" y="439.77" width="50.04" height="1.25" fill="rgb(117,113,94)" fill-opacity="0.42"/><rect x="727.20" y="441.57" width="36.05" height="1.25" fill="rgb(117,113,94)" fill-opacity="0.42"/><rect x="727.20" y="443.27" width="31.67" height="1.25" fill="rgb(117,113,94)" fill-opacity="0.42"/><rect x="727.20" y="446.18" width="7.61" height="1.25" fill="rgb(102,217,239)" fill-opacity="0.42"/><rect x="735.69" y="446.18" width="7.44" height="1.25" fill="rgb(248,248,242)" fill-opacity="0.27"/><rect x="744.00" y="446.18" width="1.31" height="1.25" fill="rgb(249,38,114)" fill-opacity="0.5"/><rect x="745.75" y="446.18" width="2.19" height="1.25" fill="rgb(249,38,114)" fill-opacity="0.5"/><rect x="748.81" y="446.18" width="7.00" height="1.25" fill="rgb(102,217,239)" fill-opacity="0.42"/><rect x="756.24" y="446.18" width="1.75" height="1.25" fill="rgb(248,248,242)" fill-opacity="0.27"/><rect x="727.20" y="447.98" width="58.79" height="1.25" fill="rgb(117,113,94)" fill-opacity="0.42"/><rect x="727.20" y="449.48" width="37.36" height="1.25" fill="rgb(117,113,94)" fill-opacity="0.42"/><rect x="727.20" y="450.77" width="29.92" height="1.25" fill="rgb(117,113,94)" fill-opacity="0.42"/><rect x="727.20" y="453.77" width="29.92" height="1.25" fill="rgb(117,113,94)" fill-opacity="0.42"/><rect x="727.20" y="455.57" width="4.99" height="1.25" fill="rgb(249,38,114)" fill-opacity="0.5"/><rect x="732.19" y="455.57" width="7.44" height="1.25" fill="rgb(248,248,242)" fill-opacity="0.27"/><rect x="727.20" y="457.38" width="1.05" height="1.25" fill="rgb(248,248,242)" fill-opacity="0.27"/><rect x="730.00" y="458.77" width="3.50" height="1.25" fill="rgb(249,38,114)" fill-opacity="0.5"/><rect x="733.94" y="458.77" width="0.87" height="1.25" fill="rgb(174,129,255)" fill-opacity="0.45"/><rect x="730.00" y="460.38" width="55.99" height="1.25" fill="rgb(117,113,94)" fill-opacity="0.42"/><rect x="730.00" y="461.98" width="48.12" height="1.25" fill="rgb(117,113,94)" fill-opacity="0.42"/><rect x="730.00" y="463.38" width="7.87" height="1.25" fill="rgb(248,248,242)" fill-opacity="0.27"/><rect x="738.31" y="463.38" width="1.31" height="1.25" fill="rgb(249,38,114)" fill-opacity="0.5"/><rect x="740.06" y="463.38" width="12.69" height="1.25" fill="rgb(248,248,242)" fill-opacity="0.27"/><rect x="753.18" y="463.38" width="7.44" height="1.25" fill="rgb(230,219,116)" fill-opacity="0.32"/><rect x="760.62" y="463.38" width="1.31" height="1.25" fill="rgb(248,248,242)" fill-opacity="0.27"/><rect x="730.00" y="465.18" width="4.37" height="1.25" fill="rgb(249,38,114)" fill-opacity="0.5"/><rect x="730.00" y="468.07" width="3.50" height="1.25" fill="rgb(249,38,114)" fill-opacity="0.5"/><rect x="733.94" y="468.07" width="0.87" height="1.25" fill="rgb(174,129,255)" fill-opacity="0.45"/><rect x="730.00" y="469.57" width="5.25" height="1.25" fill="rgb(102,217,239)" fill-opacity="0.42"/><rect x="735.69" y="469.57" width="8.31" height="1.25" fill="rgb(248,248,242)" fill-opacity="0.27"/><rect x="744.43" y="469.57" width="0.87" height="1.25" fill="rgb(249,38,114)" fill-opacity="0.5"/><rect x="745.75" y="469.57" width="7.00" height="1.25" fill="rgb(248,248,242)" fill-opacity="0.27"/><rect x="752.75" y="469.57" width="8.31" height="1.25" fill="rgb(102,217,239)" fill-opacity="0.42"/><rect x="761.49" y="469.57" width="7.00" height="1.25" fill="rgb(230,219,116)" fill-opacity="0.32"/><rect x="768.49" y="469.57" width="1.75" height="1.25" fill="rgb(248,248,242)" fill-opacity="0.27"/><rect x="730.00" y="471.07" width="7.87" height="1.25" fill="rgb(248,248,242)" fill-opacity="0.27"/><rect x="738.31" y="471.07" width="1.31" height="1.25" fill="rgb(249,38,114)" fill-opacity="0.5"/><rect x="740.06" y="471.07" width="12.69" height="1.25" fill="rgb(248,248,242)" fill-opacity="0.27"/><rect x="753.18" y="471.07" width="7.44" height="1.25" fill="rgb(230,219,116)" fill-opacity="0.32"/><rect x="760.62" y="471.07" width="1.31" height="1.25" fill="rgb(248,248,242)" fill-opacity="0.27"/><rect x="730.00" y="472.77" width="4.37" height="1.25" fill="rgb(249,38,114)" fill-opacity="0.5"/><rect x="730.00" y="475.77" width="3.50" height="1.25" fill="rgb(249,38,114)" fill-opacity="0.5"/><rect x="733.94" y="475.77" width="0.87" height="1.25" fill="rgb(174,129,255)" fill-opacity="0.45"/><rect x="730.00" y="477.38" width="7.87" height="1.25" fill="rgb(248,248,242)" fill-opacity="0.27"/><rect x="738.31" y="477.38" width="1.31" height="1.25" fill="rgb(249,38,114)" fill-opacity="0.5"/><rect x="740.06" y="477.38" width="12.69" height="1.25" fill="rgb(248,248,242)" fill-opacity="0.27"/><rect x="753.18" y="477.38" width="7.44" height="1.25" fill="rgb(230,219,116)" fill-opacity="0.32"/><rect x="760.62" y="477.38" width="1.31" height="1.25" fill="rgb(248,248,242)" fill-opacity="0.27"/><rect x="730.00" y="478.97" width="4.37" height="1.25" fill="rgb(249,38,114)" fill-opacity="0.5"/><rect x="730.00" y="481.98" width="3.50" height="1.25" fill="rgb(249,38,114)" fill-opacity="0.5"/><rect x="733.94" y="481.98" width="0.87" height="1.25" fill="rgb(174,129,255)" fill-opacity="0.45"/><rect x="730.00" y="483.58" width="7.87" height="1.25" fill="rgb(248,248,242)" fill-opacity="0.27"/><rect x="738.31" y="483.58" width="1.31" height="1.25" fill="rgb(249,38,114)" fill-opacity="0.5"/><rect x="740.06" y="483.58" width="12.69" height="1.25" fill="rgb(248,248,242)" fill-opacity="0.27"/><rect x="753.18" y="483.58" width="7.44" height="1.25" fill="rgb(230,219,116)" fill-opacity="0.32"/><rect x="760.62" y="483.58" width="1.31" height="1.25" fill="rgb(248,248,242)" fill-opacity="0.27"/><rect x="730.00" y="485.18" width="4.37" height="1.25" fill="rgb(249,38,114)" fill-opacity="0.5"/><rect x="730.00" y="488.07" width="3.50" height="1.25" fill="rgb(249,38,114)" fill-opacity="0.5"/><rect x="733.94" y="488.07" width="0.87" height="1.25" fill="rgb(174,129,255)" fill-opacity="0.45"/><rect x="730.00" y="489.68" width="7.87" height="1.25" fill="rgb(248,248,242)" fill-opacity="0.27"/><rect x="738.31" y="489.68" width="1.31" height="1.25" fill="rgb(249,38,114)" fill-opacity="0.5"/><rect x="740.06" y="489.68" width="12.69" height="1.25" fill="rgb(248,248,242)" fill-opacity="0.27"/><rect x="753.18" y="489.68" width="7.44" height="1.25" fill="rgb(230,219,116)" fill-opacity="0.32"/><rect x="760.62" y="489.68" width="1.31" height="1.25" fill="rgb(248,248,242)" fill-opacity="0.27"/><rect x="730.00" y="491.27" width="4.37" height="1.25" fill="rgb(249,38,114)" fill-opacity="0.5"/><rect x="730.00" y="494.18" width="3.50" height="1.25" fill="rgb(249,38,114)" fill-opacity="0.5"/><rect x="733.94" y="494.18" width="0.87" height="1.25" fill="rgb(174,129,255)" fill-opacity="0.45"/><rect x="730.00" y="495.78" width="7.87" height="1.25" fill="rgb(248,248,242)" fill-opacity="0.27"/><rect x="738.31" y="495.78" width="1.31" height="1.25" fill="rgb(249,38,114)" fill-opacity="0.5"/><rect x="740.06" y="495.78" width="12.69" height="1.25" fill="rgb(248,248,242)" fill-opacity="0.27"/><rect x="753.18" y="495.78" width="7.44" height="1.25" fill="rgb(230,219,116)" fill-opacity="0.32"/><rect x="760.62" y="495.78" width="1.31" height="1.25" fill="rgb(248,248,242)" fill-opacity="0.27"/><rect x="730.00" y="497.38" width="4.37" height="1.25" fill="rgb(249,38,114)" fill-opacity="0.5"/><rect x="730.00" y="500.27" width="3.50" height="1.25" fill="rgb(249,38,114)" fill-opacity="0.5"/><rect x="733.94" y="500.27" width="0.87" height="1.25" fill="rgb(174,129,255)" fill-opacity="0.45"/><rect x="730.00" y="501.88" width="7.87" height="1.25" fill="rgb(248,248,242)" fill-opacity="0.27"/><rect x="738.31" y="501.88" width="1.31" height="1.25" fill="rgb(249,38,114)" fill-opacity="0.5"/><rect x="740.06" y="501.88" width="12.69" height="1.25" fill="rgb(248,248,242)" fill-opacity="0.27"/><rect x="753.18" y="501.88" width="7.44" height="1.25" fill="rgb(230,219,116)" fill-opacity="0.32"/><rect x="760.62" y="501.88" width="1.31" height="1.25" fill="rgb(248,248,242)" fill-opacity="0.27"/><rect x="730.00" y="503.47" width="4.37" height="1.25" fill="rgb(249,38,114)" fill-opacity="0.5"/><rect x="730.00" y="506.48" width="3.50" height="1.25" fill="rgb(249,38,114)" fill-opacity="0.5"/><rect x="733.94" y="506.48" width="0.87" height="1.25" fill="rgb(174,129,255)" fill-opacity="0.45"/><rect x="730.00" y="508.18" width="55.99" height="1.25" fill="rgb(117,113,94)" fill-opacity="0.42"/><rect x="730.00" y="509.98" width="51.18" height="1.25" fill="rgb(117,113,94)" fill-opacity="0.42"/><rect x="730.00" y="511.67" width="44.62" height="1.25" fill="rgb(117,113,94)" fill-opacity="0.42"/><rect x="730.00" y="513.17" width="44.18" height="1.25" fill="rgb(117,113,94)" fill-opacity="0.42"/><rect x="730.00" y="515.77" width="2.62" height="1.25" fill="rgb(102,217,239)" fill-opacity="0.42"/><rect x="733.06" y="515.77" width="13.12" height="1.25" fill="rgb(248,248,242)" fill-opacity="0.27"/><rect x="747.06" y="515.77" width="0.87" height="1.25" fill="rgb(249,38,114)" fill-opacity="0.5"/><rect x="748.81" y="515.77" width="12.69" height="1.25" fill="rgb(248,248,242)" fill-opacity="0.27"/><rect x="761.93" y="515.77" width="5.69" height="1.25" fill="rgb(230,219,116)" fill-opacity="0.32"/><rect x="767.62" y="515.77" width="0.87" height="1.25" fill="rgb(248,248,242)" fill-opacity="0.27"/><rect x="730.00" y="517.48" width="2.19" height="1.25" fill="rgb(249,38,114)" fill-opacity="0.5"/><rect x="732.62" y="517.48" width="14.87" height="1.25" fill="rgb(248,248,242)" fill-opacity="0.27"/><rect x="748.81" y="517.48" width="8.31" height="1.25" fill="rgb(248,248,242)" fill-opacity="0.27"/><rect x="757.56" y="517.48" width="0.44" height="1.25" fill="rgb(249,38,114)" fill-opacity="0.5"/><rect x="763.68" y="517.48" width="2.19" height="1.25" fill="rgb(174,129,255)" fill-opacity="0.45"/><rect x="766.74" y="517.48" width="14.00" height="1.25" fill="rgb(248,248,242)" fill-opacity="0.27"/><rect x="730.00" y="519.08" width="0.87" height="1.25" fill="rgb(248,248,242)" fill-opacity="0.27"/><rect x="733.06" y="520.98" width="8.31" height="1.25" fill="rgb(117,113,94)" fill-opacity="0.42"/><rect x="733.06" y="522.58" width="47.24" height="1.25" fill="rgb(117,113,94)" fill-opacity="0.42"/><rect x="733.06" y="524.08" width="14.00" height="1.25" fill="rgb(117,113,94)" fill-opacity="0.42"/><rect x="733.06" y="527.08" width="5.69" height="1.25" fill="rgb(102,217,239)" fill-opacity="0.42"/><rect x="739.62" y="527.08" width="1.31" height="1.25" fill="rgb(248,248,242)" fill-opacity="0.27"/><rect x="741.37" y="527.08" width="0.87" height="1.25" fill="rgb(249,38,114)" fill-opacity="0.5"/><rect x="743.12" y="527.08" width="13.12" height="1.25" fill="rgb(248,248,242)" fill-opacity="0.27"/><rect x="733.06" y="528.67" width="8.31" height="1.25" fill="rgb(102,217,239)" fill-opacity="0.42"/><rect x="741.81" y="528.67" width="14.44" height="1.25" fill="rgb(248,248,242)" fill-opacity="0.27"/><rect x="756.68" y="528.67" width="0.44" height="1.25" fill="rgb(249,38,114)" fill-opacity="0.5"/><rect x="757.12" y="528.67" width="12.69" height="1.25" fill="rgb(102,217,239)" fill-opacity="0.42"/><rect x="769.81" y="528.67" width="1.31" height="1.25" fill="rgb(248,248,242)" fill-opacity="0.27"/><rect x="733.06" y="530.17" width="3.94" height="1.25" fill="rgb(249,38,114)" fill-opacity="0.5"/><rect x="737.43" y="530.17" width="7.44" height="1.25" fill="rgb(248,248,242)" fill-opacity="0.27"/><rect x="745.75" y="530.17" width="40.24" height="1.25" fill="rgb(117,113,94)" fill-opacity="0.42"/><rect x="733.06" y="531.67" width="0.87" height="1.25" fill="rgb(248,248,242)" fill-opacity="0.27"/><rect x="736.12" y="533.27" width="1.31" height="1.25" fill="rgb(249,38,114)" fill-opacity="0.5"/><rect x="738.31" y="533.27" width="7.87" height="1.25" fill="rgb(248,248,242)" fill-opacity="0.27"/><rect x="749.68" y="533.27" width="7.44" height="1.25" fill="rgb(230,219,116)" fill-opacity="0.32"/><rect x="757.12" y="533.27" width="2.62" height="1.25" fill="rgb(248,248,242)" fill-opacity="0.27"/><rect x="736.12" y="534.77" width="0.87" height="1.25" fill="rgb(248,248,242)" fill-opacity="0.27"/><rect x="738.75" y="536.77" width="9.62" height="1.25" fill="rgb(248,248,242)" fill-opacity="0.27"/><rect x="748.37" y="536.77" width="0.87" height="1.25" fill="rgb(249,38,114)" fill-opacity="0.5"/><rect x="749.25" y="536.77" width="3.50" height="1.25" fill="rgb(248,248,242)" fill-opacity="0.27"/><rect x="752.75" y="536.77" width="4.81" height="1.25" fill="rgb(102,217,239)" fill-opacity="0.42"/><rect x="757.99" y="536.77" width="7.87" height="1.25" fill="rgb(248,248,242)" fill-opacity="0.27"/><rect x="736.12" y="538.27" width="0.87" height="1.25" fill="rgb(248,248,242)" fill-opacity="0.27"/><rect x="733.06" y="539.58" width="0.87" height="1.25" fill="rgb(248,248,242)" fill-opacity="0.27"/><rect x="733.06" y="541.08" width="7.87" height="1.25" fill="rgb(248,248,242)" fill-opacity="0.27"/><rect x="740.93" y="541.08" width="1.31" height="1.25" fill="rgb(249,38,114)" fill-opacity="0.5"/><rect x="742.68" y="541.08" width="13.12" height="1.25" fill="rgb(248,248,242)" fill-opacity="0.27"/><rect x="755.81" y="541.08" width="7.44" height="1.25" fill="rgb(230,219,116)" fill-opacity="0.32"/><rect x="763.24" y="541.08" width="1.31" height="1.25" fill="rgb(248,248,242)" fill-opacity="0.27"/><rect x="730.00" y="542.67" width="0.87" height="1.25" fill="rgb(248,248,242)" fill-opacity="0.27"/><rect x="730.00" y="544.38" width="4.37" height="1.25" fill="rgb(249,38,114)" fill-opacity="0.5"/><rect x="730.00" y="547.38" width="6.12" height="1.25" fill="rgb(249,38,114)" fill-opacity="0.5"/><rect x="730.00" y="548.98" width="7.87" height="1.25" fill="rgb(248,248,242)" fill-opacity="0.27"/><rect x="738.31" y="548.98" width="1.31" height="1.25" fill="rgb(249,38,114)" fill-opacity="0.5"/><rect x="739.62" y="548.98" width="1.31" height="1.25" fill="rgb(174,129,255)" fill-opacity="0.45"/><rect x="730.00" y="550.58" width="4.37" height="1.25" fill="rgb(249,38,114)" fill-opacity="0.5"/><rect x="724.31" y="552.67" width="4.81" height="1.25" fill="rgb(249,38,114)" fill-opacity="0.5"/><rect x="729.12" y="552.67" width="10.50" height="1.25" fill="rgb(102,217,239)" fill-opacity="0.42"/></g></svg></div>
<div id="sbtrack"><div id="thumb"></div></div>
</div>
<div id="rborder"></div>
<div id="lborder"></div>
<div id="bborder"></div>
<div id="sbline"></div>
</body></html>
